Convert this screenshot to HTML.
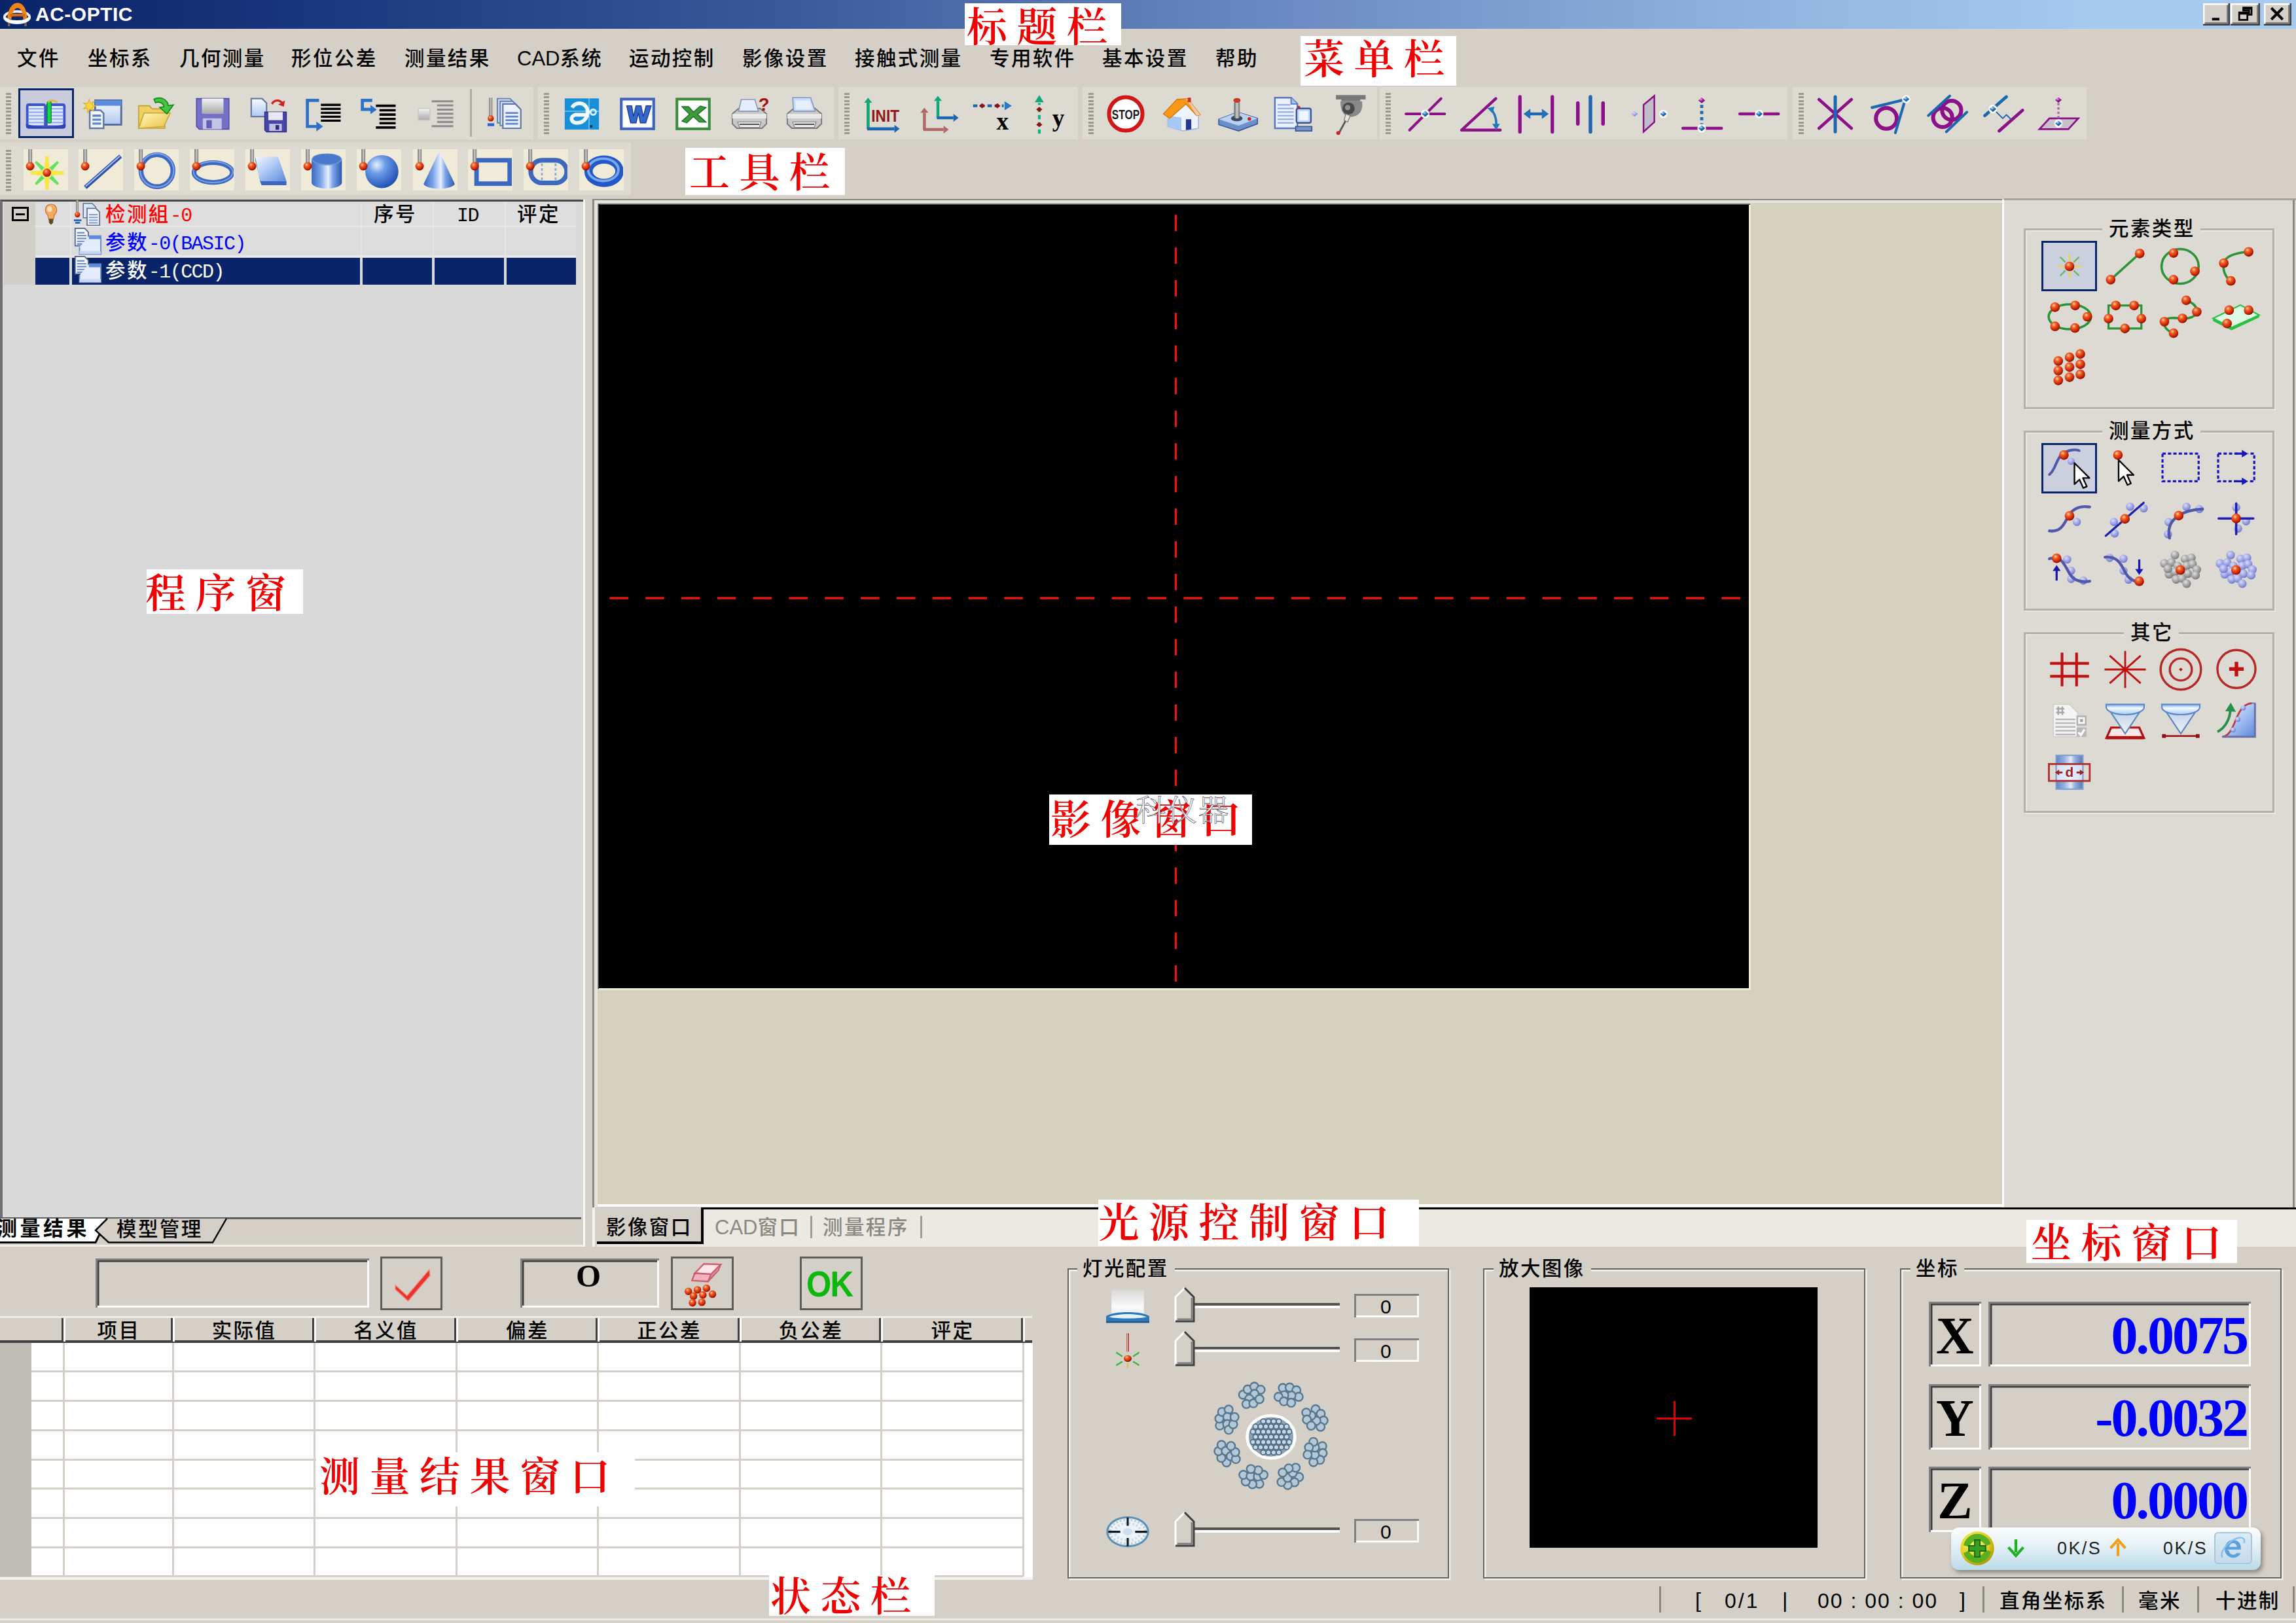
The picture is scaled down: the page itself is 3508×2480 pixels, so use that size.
<!DOCTYPE html>
<html lang="zh-CN"><head><meta charset="utf-8"><title>AC-OPTIC</title><style>
html,body{margin:0;padding:0;}
body{width:3508px;height:2480px;overflow:hidden;background:#d4d0c8;position:relative;font-family:"Liberation Sans","Noto Sans CJK SC",sans-serif;}
#r{position:absolute;left:0;top:0;width:3508px;height:2480px;overflow:hidden;}
#r div,#r svg{position:absolute;}
.t{white-space:nowrap;font-family:"Liberation Sans","Noto Sans CJK SC",sans-serif;}
.c{letter-spacing:2.4px;font-weight:500;}
.l{letter-spacing:0;font-size:31px;}
.m{font-family:"Liberation Mono","Noto Sans CJK SC",monospace;letter-spacing:-1.55px;font-size:30px;}
.s{font-family:"Liberation Sans","Noto Sans CJK SC",sans-serif;}
.s2{font-family:"Liberation Serif","Noto Serif CJK SC",serif;}
.wm{white-space:nowrap;color:#fff;-webkit-text-stroke:.7px #556;font-weight:300;font-family:"Liberation Serif","Noto Serif CJK SC",serif;letter-spacing:2px;}
.lab{background:#fff;color:#f00000;white-space:nowrap;font-weight:600;font-family:"Liberation Serif","Noto Serif CJK SC",serif;overflow:hidden;}
</style></head><body>
<svg width="0" height="0" style="position:absolute"><defs>
<radialGradient id="rb" cx="38%" cy="32%" r="70%"><stop offset="0" stop-color="#ffd8a8"/><stop offset=".3" stop-color="#f46028"/><stop offset=".7" stop-color="#d02808"/><stop offset="1" stop-color="#801000"/></radialGradient>
<radialGradient id="bb" cx="38%" cy="32%" r="70%"><stop offset="0" stop-color="#c8e8ff"/><stop offset=".4" stop-color="#2c80c8"/><stop offset="1" stop-color="#0c3c78"/></radialGradient>
<radialGradient id="pb" cx="38%" cy="32%" r="70%"><stop offset="0" stop-color="#f0b0f0"/><stop offset=".4" stop-color="#a020a0"/><stop offset="1" stop-color="#500050"/></radialGradient>
<radialGradient id="lb" cx="38%" cy="32%" r="70%"><stop offset="0" stop-color="#d8dcff"/><stop offset=".6" stop-color="#9aa0e0"/><stop offset="1" stop-color="#7078c8"/></radialGradient>
<radialGradient id="gb" cx="38%" cy="32%" r="70%"><stop offset="0" stop-color="#e0e0e0"/><stop offset=".6" stop-color="#a0a0a0"/><stop offset="1" stop-color="#787878"/></radialGradient>
<radialGradient id="sph" cx="35%" cy="30%" r="75%"><stop offset="0" stop-color="#e8f2ff"/><stop offset=".35" stop-color="#6c9ce8"/><stop offset="1" stop-color="#1c4cb0"/></radialGradient>
<linearGradient id="bv" x1="0" y1="0" x2="0" y2="1"><stop offset="0" stop-color="#b8d0f8"/><stop offset="1" stop-color="#3c68c8"/></linearGradient>
<linearGradient id="bh" x1="0" y1="0" x2="1" y2="0"><stop offset="0" stop-color="#3868c0"/><stop offset=".3" stop-color="#7ca4e8"/><stop offset=".55" stop-color="#e8f0ff"/><stop offset=".7" stop-color="#7ca4e8"/><stop offset="1" stop-color="#2c58b0"/></linearGradient>
<linearGradient id="bd" x1="0" y1="0" x2="1" y2="1"><stop offset="0" stop-color="#f4f8ff"/><stop offset=".5" stop-color="#a8c4f4"/><stop offset="1" stop-color="#5c88dc"/></linearGradient>
<linearGradient id="pg" x1="0" y1="0" x2="0" y2="1"><stop offset="0" stop-color="#f8fbff"/><stop offset="1" stop-color="#b0c8f0"/></linearGradient>
<linearGradient id="st" x1="0" y1="0" x2="1" y2="0"><stop offset="0" stop-color="#606060"/><stop offset=".5" stop-color="#d0d0d0"/><stop offset="1" stop-color="#707070"/></linearGradient>
<linearGradient id="fo" x1="0" y1="0" x2="1" y2="1"><stop offset="0" stop-color="#fff8c0"/><stop offset="1" stop-color="#e8c040"/></linearGradient>
<linearGradient id="gr" x1="0" y1="0" x2="0" y2="1"><stop offset="0" stop-color="#f4f4f4"/><stop offset="1" stop-color="#a8a8a8"/></linearGradient>
<linearGradient id="ln" x1="0" y1="0" x2="0" y2="1"><stop offset="0" stop-color="#6c9ce0"/><stop offset=".35" stop-color="#f4faff"/><stop offset="1" stop-color="#a8c8f0"/></linearGradient>
<linearGradient id="cn" x1="0" y1="0" x2="0" y2="1"><stop offset="0" stop-color="#b8ccec"/><stop offset="1" stop-color="#f4f4f4"/></linearGradient>
<radialGradient id="g360" cx="40%" cy="35%" r="70%"><stop offset="0" stop-color="#fff870"/><stop offset=".6" stop-color="#e8d020"/><stop offset="1" stop-color="#b09000"/></radialGradient>
</defs></svg>
<div id="r">
<div style="left:0px;top:0px;width:3508px;height:44px;background:linear-gradient(90deg,#0a246a 0%,#1c3880 15%,#3d5a9c 35%,#6a88c0 55%,#8fb0dd 75%,#a6caf0 92%,#a6caf0 100%);"></div>
<svg class="i" style="left:5px;top:0px;" width="42" height="42" viewBox="0 0 24 24"><ellipse cx="12" cy="15" rx="11" ry="5" fill="none" stroke="#e8f0f8" stroke-width="2.2"/><path d="M3.5 17 C4 7 8 2.5 12.5 2.5 C17 2.5 20.5 7 21 17 L17.5 17 C17 10 15 7 12.5 7 C10 7 8 10 7 17 Z" fill="#f08418"/><path d="M6 12 H19 V14.4 H6 Z" fill="#d86808"/><path d="M1.5 15.5 C4 20 20 20 22.8 15.5" fill="none" stroke="#fff" stroke-width="2.2"/><rect x="4" y="20" width="2" height="3" fill="#806040"/><rect x="18.5" y="20" width="2" height="3" fill="#806040"/></svg>
<div class="t s" style="left:54px;top:-8px;height:60px;line-height:60px;font-size:30px;color:#fff;font-weight:bold;letter-spacing:0.5px;">AC-OPTIC</div>
<div style="left:3366px;top:5px;width:41px;height:34px;background:#d4d0c8;box-shadow:inset -2.5px -2.5px 0 #404040, inset 2.5px 2.5px 0 #fff, inset -5px -5px 0 #808080;"></div>
<svg class="i" style="left:3370.5px;top:6px;" width="30" height="30" viewBox="0 0 24 24"><rect x="7" y="17" width="9" height="3.2" fill="#000"/></svg>
<div style="left:3408px;top:5px;width:45px;height:34px;background:#d4d0c8;box-shadow:inset -2.5px -2.5px 0 #404040, inset 2.5px 2.5px 0 #fff, inset -5px -5px 0 #808080;"></div>
<svg class="i" style="left:3414.5px;top:6px;" width="30" height="30" viewBox="0 0 24 24"><path d="M10 4.5 H20 V13 H17 V8 H10 Z" fill="none" stroke="#000" stroke-width="2.2"/><rect x="5" y="10.5" width="10" height="9" fill="none" stroke="#000" stroke-width="2.2"/><rect x="5" y="10" width="10" height="3" fill="#000"/><rect x="10" y="4" width="10" height="3" fill="#000"/></svg>
<div style="left:3459px;top:5px;width:42px;height:34px;background:#d4d0c8;box-shadow:inset -2.5px -2.5px 0 #404040, inset 2.5px 2.5px 0 #fff, inset -5px -5px 0 #808080;"></div>
<svg class="i" style="left:3464px;top:6px;" width="30" height="30" viewBox="0 0 24 24"><path d="M5 5 L19 19 M19 5 L5 19" stroke="#000" stroke-width="3.2"/></svg>
<div class="t c" style="left:26px;top:58.5px;height:61px;line-height:61px;font-size:30.5px;color:#000;">文件</div>
<div class="t c" style="left:134px;top:58.5px;height:61px;line-height:61px;font-size:30.5px;color:#000;">坐标系</div>
<div class="t c" style="left:274px;top:58.5px;height:61px;line-height:61px;font-size:30.5px;color:#000;">几何测量</div>
<div class="t c" style="left:445px;top:58.5px;height:61px;line-height:61px;font-size:30.5px;color:#000;">形位公差</div>
<div class="t c" style="left:618px;top:58.5px;height:61px;line-height:61px;font-size:30.5px;color:#000;">测量结果</div>
<div class="t c" style="left:790px;top:58.5px;height:61px;line-height:61px;font-size:30.5px;color:#000;"><span class="l">CAD</span>系统</div>
<div class="t c" style="left:961px;top:58.5px;height:61px;line-height:61px;font-size:30.5px;color:#000;">运动控制</div>
<div class="t c" style="left:1134px;top:58.5px;height:61px;line-height:61px;font-size:30.5px;color:#000;">影像设置</div>
<div class="t c" style="left:1306px;top:58.5px;height:61px;line-height:61px;font-size:30.5px;color:#000;">接触式测量</div>
<div class="t c" style="left:1512px;top:58.5px;height:61px;line-height:61px;font-size:30.5px;color:#000;">专用软件</div>
<div class="t c" style="left:1684px;top:58.5px;height:61px;line-height:61px;font-size:30.5px;color:#000;">基本设置</div>
<div class="t c" style="left:1857px;top:58.5px;height:61px;line-height:61px;font-size:30.5px;color:#000;">帮助</div>
<div style="left:0px;top:133px;width:815px;height:80px;background:#dddad2;"></div>
<div style="left:9px;top:142px;width:8px;height:63px;background:repeating-linear-gradient(180deg,#8a8880 0,#8a8880 2.7px,transparent 2.7px,transparent 5.5px);opacity:.8"></div>
<div style="left:27.5px;top:135px;width:85px;height:76px;background:#c8ccdc;border:3px solid #0a246a;box-sizing:border-box;"></div>
<svg class="i" style="left:37px;top:141px;" width="66" height="66" viewBox="0 0 24 24"><path d="M1 7.8 Q1 6.2 2.6 6.2 H10.6 Q12 6.2 12 7.6 Q12 6.2 13.4 6.2 H21.4 Q23 6.2 23 7.8 V18.6 Q23 20.2 21.4 20.2 H2.6 Q1 20.2 1 18.6 Z" fill="#3c54c8"/><path d="M2.4 7.6 H11 V18.4 H2.4 Z M13 7.6 H21.6 V18.4 H13 Z" fill="#e4ecff"/><path d="M2.4 9.2 H11 M2.4 11.1 H11 M2.4 13 H11 M2.4 14.9 H11 M2.4 16.8 H11 M13 9.2 H21.6 M13 11.1 H21.6 M13 13 H21.6 M13 14.9 H21.6 M13 16.8 H21.6" stroke="#98b0f4" stroke-width=".9"/><path d="M1 17.5 Q12 21 23 17.5 V18.6 Q23 20.2 21.4 20.2 H2.6 Q1 20.2 1 18.6 Z" fill="#2c44b8"/><rect x="12.8" y="5.2" width="2.2" height="11.8" rx=".7" fill="#18d448" stroke="#0c9030" stroke-width=".5"/><path d="M13 5.4 Q16 3.6 18.4 5.8" fill="none" stroke="#e0b838" stroke-width=".9"/></svg>
<svg class="i" style="left:122px;top:141px;" width="66" height="66" viewBox="0 0 24 24"><rect x="8.5" y="4.5" width="14.5" height="13.5" fill="url(#pg)" stroke="#506898" stroke-width="1"/><rect x="8.5" y="4.5" width="14.5" height="3" fill="#5c8ce0"/><path d="M5.5 10 H11.5 L13.2 11.7 V20 H5.5 Z" fill="#f4f8ff" stroke="#6078a8" stroke-width=".9"/><path d="M7 13 H11.8 M7 15.2 H11.8 M7 17.4 H11.8" stroke="#5c84d0" stroke-width="1.2"/><path d="M5.2 4 L5.9 6.2 L8 5 L6.8 7 L9 7.6 L6.8 8.3 L7.7 10.5 L5.6 9.2 L4.4 11.4 L4.2 8.9 L2 9.2 L3.8 7.6 L2 5.9 L4.3 6.4 Z" fill="#f8d840" stroke="#e0b020" stroke-width=".4"/></svg>
<svg class="i" style="left:205px;top:141px;" width="66" height="66" viewBox="0 0 24 24"><path d="M2.5 7.5 H8.5 L10 9.2 H17 V20 H2.5 Z" fill="#f0d060" stroke="#c0a030" stroke-width=".6"/><path d="M2.5 20 L5.5 11.5 H20 L16.5 19 Z" fill="url(#fo)" stroke="#c8a838" stroke-width=".6"/><path d="M11 3.8 C14.5 2.2 18.5 3.8 19 7.4 L21.8 7 L18.2 12 L14.2 8.4 L16.6 8 C16.2 5.8 13.8 5 11.8 5.8 Z" fill="#40c840" stroke="#188818" stroke-width=".6"/></svg>
<svg class="i" style="left:292px;top:141px;" width="66" height="66" viewBox="0 0 24 24"><path d="M3 3.5 H21 V20.5 H4.5 L3 19 Z" fill="#7470c8" stroke="#5450a8" stroke-width=".6"/><rect x="6" y="3.5" width="12" height="8.5" fill="url(#gr)"/><rect x="6.5" y="14.5" width="10.5" height="6" fill="#c4c4e8"/><rect x="8.5" y="15.5" width="3" height="4.5" fill="#6460b8"/></svg>
<svg class="i" style="left:377px;top:141px;" width="66" height="66" viewBox="0 0 24 24"><path d="M2.5 3.5 H8.5 L11 6 V13.5 H2.5 Z" fill="url(#pg)" stroke="#6878a0" stroke-width=".8"/><path d="M10 11 H22 V22 H11 L10 21 Z" fill="#4844a8" stroke="#302c80" stroke-width=".5"/><rect x="12" y="11" width="8" height="4.5" fill="#e8e8f4"/><rect x="12.5" y="17.5" width="7" height="4" fill="#c0c0e0"/><rect x="16" y="18.2" width="2" height="2.6" fill="#302c80"/><path d="M14 6.5 C15.5 4 18.5 4 20 6.5" fill="none" stroke="#d02020" stroke-width="1.2"/><path d="M21.2 4.5 L20.6 8 L17.5 6.8 Z" fill="#d02020"/></svg>
<svg class="i" style="left:460px;top:141px;" width="66" height="66" viewBox="0 0 24 24"><path d="M10 4.5 H3.5 V19 H9" fill="none" stroke="#2c70c8" stroke-width="1.7"/><path d="M8.5 16.3 L12.2 19 L8.5 21.7 Z" fill="#2c70c8"/><path d="M11 7 H22 M11 9.2 H22 M11 11.4 H22 M11 13.6 H22 M11 15.8 H22" stroke="#000" stroke-width="1.2"/></svg>
<svg class="i" style="left:544px;top:141px;" width="66" height="66" viewBox="0 0 24 24"><path d="M9 4.5 H3.5 V9.5 H9" fill="none" stroke="#2c70c8" stroke-width="1.7"/><path d="M8 7 L11.5 9.6 L8 12.2 Z" fill="#2c70c8"/><path d="M11 7.5 H22 M13 10 H22 M13 12.4 H22 M13 14.8 H22 M13 17.2 H22 M11 19.6 H22" stroke="#000" stroke-width="1.3"/></svg>
<svg class="i" style="left:632px;top:141px;" width="66" height="66" viewBox="0 0 24 24"><rect x="2.5" y="9" width="6.5" height="6.5" rx=".8" fill="url(#gr)" stroke="#c8c8c8" stroke-width=".6"/><path d="M10 5 H22 M13 7.3 H22 M13 9.6 H22 M13 11.9 H22 M13 14.2 H22 M13 16.5 H22 M10 18.8 H22" stroke="#8c8c8c" stroke-width="1.1"/></svg>
<svg class="i" style="left:738px;top:141px;" width="66" height="66" viewBox="0 0 24 24"><rect x="3.4" y="3" width="1.8" height="11" fill="url(#st)"/><circle cx="4.3" cy="14.5" r="1.7" fill="url(#rb)"/><path d="M2.5 18 H6.2" stroke="#2468c8" stroke-width="1.6"/><path d="M8 3.5 H15 L18 6.5 V17 H8 Z" fill="#c8d8f4" stroke="#6880b0" stroke-width=".7"/><path d="M9.5 5 H16.5 L19.5 8 V18.5 H9.5 Z" fill="#d8e4fa" stroke="#6880b0" stroke-width=".7"/><path d="M11 6.5 H18 L21 9.5 V20 H11 Z" fill="#ecf2ff" stroke="#6078a8" stroke-width=".8"/><path d="M12.5 11.5 H19.5 M12.5 13.5 H19.5 M12.5 15.5 H19.5 M12.5 17.5 H19.5" stroke="#5c84d0" stroke-width="1"/></svg>
<div style="left:822px;top:133px;width:452px;height:80px;background:#dddad2;"></div>
<div style="left:831px;top:142px;width:8px;height:63px;background:repeating-linear-gradient(180deg,#8a8880 0,#8a8880 2.7px,transparent 2.7px,transparent 5.5px);opacity:.8"></div>
<svg class="i" style="left:856px;top:141px;" width="66" height="66" viewBox="0 0 24 24"><rect x="2.5" y="3.4" width="19" height="17.3" fill="#1890d8"/><path d="M16 3.4 V20.7 M2.5 10.5 H21.5" stroke="#70c0f0" stroke-width=".6"/><path d="M6.5 8.5 C8.5 5.2 13.5 5.2 15 9.3 C16 13 13.5 17 9.5 17 C6 17 5 13.6 8.3 12.5 H16" fill="none" stroke="#f0faff" stroke-width="2.1"/><circle cx="18.3" cy="11" r="1.5" fill="none" stroke="#e0f4ff" stroke-width="1"/><rect x="16.5" y="18.3" width="1.3" height="1.3" fill="#082848"/></svg>
<svg class="i" style="left:941px;top:141px;" width="66" height="66" viewBox="0 0 24 24"><rect x="3" y="3.8" width="18" height="16.5" fill="#fff" stroke="#3c64c0" stroke-width="1.5"/><path d="M6 7.5 L8.2 17 L11.2 17 L12.5 11.5 L13.6 17 L16.6 17 L19.6 7.5 L16.8 7.5 L15.2 13.5 L14 7.5 L11.2 7.5 L9.8 13.5 L8.8 7.5 Z" fill="#3468c8" stroke="#1c3c98" stroke-width=".5"/></svg>
<svg class="i" style="left:1026px;top:141px;" width="66" height="66" viewBox="0 0 24 24"><rect x="3" y="3.8" width="18" height="16.5" fill="#fff" stroke="#3c8c3c" stroke-width="1.5"/><path d="M5.8 8 L9.5 8 L12.2 11 L16 7.6 L19.2 8.5 L14.5 12.3 L19.2 16.6 L15.5 16.6 L12.2 13.5 L8.5 17 L5.8 16 L10 12.3 Z" fill="#3c9c3c" stroke="#1c6c1c" stroke-width=".5"/></svg>
<svg class="i" style="left:1112px;top:141px;" width="66" height="66" viewBox="0 0 24 24"><path d="M2.5 12 L6 9 H18 L21.5 12 V17.5 L19 20 H5 L2.5 17.5 Z" fill="#c8c8c8" stroke="#787878" stroke-width=".7"/><path d="M2.5 12 H21.5 V14.5 H2.5 Z" fill="#e8e8e8"/><path d="M5.5 16.5 H18.5 L17.5 19.5 H6.5 Z" fill="#f8f8f8" stroke="#888" stroke-width=".5"/><path d="M6.5 17.8 H17.5" stroke="#505050" stroke-width=".8"/><path d="M6 10.5 L7.5 4 H15 L17 10.5 Z" fill="#e4eeff" stroke="#8898b8" stroke-width=".6"/><text x="17" y="10" font-family="Liberation Sans, sans-serif" font-weight="bold" font-size="10" fill="#a01010">?</text></svg>
<svg class="i" style="left:1196px;top:141px;" width="66" height="66" viewBox="0 0 24 24"><path d="M2.5 12 L6 9 H18 L21.5 12 V17.5 L19 20 H5 L2.5 17.5 Z" fill="#c8c8c8" stroke="#787878" stroke-width=".7"/><path d="M2.5 12 H21.5 V14.5 H2.5 Z" fill="#e8e8e8"/><path d="M5.5 16.5 H18.5 L17.5 19.5 H6.5 Z" fill="#f8f8f8" stroke="#888" stroke-width=".5"/><path d="M6.5 17.8 H17.5" stroke="#505050" stroke-width=".8"/><path d="M6 10.5 L5.5 3 H15.5 L18 10.5 Z" fill="#c8dcff" stroke="#8898b8" stroke-width=".6"/><path d="M7 4.5 H15 L16.5 9.5 H7.4 Z" fill="#e8f0ff"/></svg>
<div style="left:1281px;top:133px;width:366px;height:80px;background:#dddad2;"></div>
<div style="left:1290px;top:142px;width:8px;height:63px;background:repeating-linear-gradient(180deg,#8a8880 0,#8a8880 2.7px,transparent 2.7px,transparent 5.5px);opacity:.8"></div>
<svg class="i" style="left:1314px;top:141px;" width="66" height="66" viewBox="0 0 24 24"><line x1="4.5" y1="20.5" x2="4.50" y2="5.86" stroke="#10a878" stroke-width="1.7"/><path d="M4.50 3.00 L6.70 5.86 L2.30 5.86 Z" fill="#10a878"/><line x1="4" y1="20.3" x2="19.14" y2="20.30" stroke="#1c68b0" stroke-width="1.7"/><path d="M22.00 20.30 L19.14 22.50 L19.14 18.10 Z" fill="#1c68b0"/><text x="6.3" y="16.5" font-family="Liberation Sans, sans-serif" font-size="9.2" font-weight="bold" fill="#901818" textLength="15.5" lengthAdjust="spacingAndGlyphs">INIT</text></svg>
<svg class="i" style="left:1400px;top:141px;" width="66" height="66" viewBox="0 0 24 24"><line x1="4.5" y1="21" x2="4.50" y2="11.36" stroke="#b06868" stroke-width="1.6"/><path d="M4.50 8.50 L6.70 11.36 L2.30 11.36 Z" fill="#b06868"/><line x1="4" y1="20.7" x2="15.14" y2="20.70" stroke="#b06868" stroke-width="1.6"/><path d="M18.00 20.70 L15.14 22.90 L15.14 18.50 Z" fill="#b06868"/><line x1="12" y1="14.5" x2="12.00" y2="4.86" stroke="#10a878" stroke-width="1.6"/><path d="M12.00 2.00 L14.20 4.86 L9.80 4.86 Z" fill="#10a878"/><line x1="11.5" y1="14.2" x2="20.64" y2="14.20" stroke="#1c68b0" stroke-width="1.6"/><path d="M23.50 14.20 L20.64 16.40 L20.64 12.00 Z" fill="#1c68b0"/></svg>
<svg class="i" style="left:1484px;top:141px;" width="66" height="66" viewBox="0 0 24 24"><path d="M1 7.5 H18" stroke="#1c68b0" stroke-width="1.5" stroke-dasharray="2.4 1.6"/><path d="M22.5 7.5 L18.5 5 V10 Z" fill="#2c78c8"/><path d="M4.3 7.5 L6 6.1 L7.7 7.5 L6 8.9 Z" fill="#901010"/><path d="M12.799999999999999 7.5 L14.5 6.1 L16.2 7.5 L14.5 8.9 Z" fill="#901010"/><text x="14" y="20.6" font-family="Liberation Serif, serif" font-size="13.5" font-weight="bold" fill="#000">x</text></svg>
<svg class="i" style="left:1570px;top:141px;" width="66" height="66" viewBox="0 0 24 24"><path d="M6.5 23 V6" stroke="#10b080" stroke-width="1.5" stroke-dasharray="2.4 1.6"/><path d="M6.5 1.5 L4 5.5 H9 Z" fill="#10a878"/><path d="M4.8 9.5 L6.5 8.1 L8.200000000000001 9.5 L6.5 10.9 Z" fill="#901010"/><path d="M4.8 18 L6.5 16.6 L8.200000000000001 18 L6.5 19.4 Z" fill="#901010"/><text x="13.7" y="19" font-family="Liberation Serif, serif" font-size="13.5" font-weight="bold" fill="#000">y</text></svg>
<div style="left:1654px;top:133px;width:450px;height:80px;background:#dddad2;"></div>
<div style="left:1663px;top:142px;width:8px;height:63px;background:repeating-linear-gradient(180deg,#8a8880 0,#8a8880 2.7px,transparent 2.7px,transparent 5.5px);opacity:.8"></div>
<svg class="i" style="left:1687px;top:141px;" width="66" height="66" viewBox="0 0 24 24"><circle cx="12" cy="12" r="9.3" fill="#fff" stroke="#d01818" stroke-width="2.2"/><text x="4.3" y="14.8" font-family="Liberation Sans, sans-serif" font-size="7.4" font-weight="bold" fill="#181818" textLength="15.4" lengthAdjust="spacingAndGlyphs">STOP</text></svg>
<svg class="i" style="left:1772px;top:141px;" width="66" height="66" viewBox="0 0 24 24"><path d="M4.5 12 L12.5 5 L21.5 12.5 V20 L13 21.5 L4.5 19 Z" fill="#eef4ff" stroke="#a0b8e0" stroke-width=".6"/><path d="M4.5 13 L4.5 19 L12 21.3 V14 Z" fill="#a8c8f4"/><path d="M2 12 L9.5 4 L15.5 3.5 L22.5 12.5 L20.5 13 L14.5 6.5 L5.5 14.5 Z" fill="#f89818" stroke="#d87808" stroke-width=".5"/><path d="M14.5 3.6 L15.6 3.5 L22.5 12.5 L20.5 13 Z" fill="#f8c8a0"/><rect x="15.5" y="3" width="1.8" height="2.5" fill="#c83020"/><path d="M14.5 15 H17.5 V20.5 L14.5 21 Z" fill="#283890"/></svg>
<svg class="i" style="left:1858px;top:141px;" width="66" height="66" viewBox="0 0 24 24"><path d="M1.5 15 L12 11 L23 14.5 V17.5 L12.5 21.5 L1.5 18 Z" fill="#6c90c8" stroke="#38589c" stroke-width=".6"/><path d="M1.5 15 L12 11 L23 14.5 L12.5 18.5 Z" fill="#b8d0f4"/><ellipse cx="11.5" cy="14.5" rx="3.2" ry="1.6" fill="#404860"/><rect x="10" y="5" width="3.2" height="9.5" rx="1.2" fill="url(#st)"/><ellipse cx="11.6" cy="4.5" rx="2" ry="1.3" fill="#c83828"/><circle cx="18.5" cy="14.8" r="1" fill="#d02020"/></svg>
<svg class="i" style="left:1941px;top:141px;" width="66" height="66" viewBox="0 0 24 24"><path d="M2.5 3 H11.5 L15 6.5 V20 H2.5 Z" fill="#e8f0ff" stroke="#5878c0" stroke-width=".9"/><path d="M11.5 3 V6.5 H15" fill="#a8c0f0" stroke="#5878c0" stroke-width=".7"/><path d="M4 7 H11 M4 9 H13 M4 11 H13 M4 13 H13 M4 15 H13 M4 17 H13" stroke="#8ca8e0" stroke-width=".8"/><rect x="14.5" y="9" width="8" height="8" rx="1" fill="#c8d8f0" stroke="#385898" stroke-width=".9"/><rect x="16" y="10.5" width="5" height="5" fill="#f0f6ff"/><path d="M14 19 H23 V21.5 H14 Z" fill="#7890c0" stroke="#385898" stroke-width=".6"/><circle cx="15.8" cy="8.3" r=".8" fill="#d02020"/></svg>
<svg class="i" style="left:2026px;top:141px;" width="66" height="66" viewBox="0 0 24 24"><path d="M5.5 1.5 H22 V4 H19 V5 H8.5 V4 H5.5 Z" fill="#787878"/><path d="M8 5 C8 13 12 14 15 13.5 C20 12.5 20.5 8 20 5 Z" fill="#888"/><circle cx="12.5" cy="9" r="3.4" fill="#484848"/><circle cx="12" cy="8.5" r="1.5" fill="#909090"/><path d="M11 12 L13.5 13 L12 16.5 L10 15.5 Z" fill="#e0e0e0" stroke="#707070" stroke-width=".4"/><path d="M10.8 16 L7 23" stroke="#585858" stroke-width="1"/><circle cx="6.8" cy="22.6" r="1.1" fill="#d02020"/></svg>
<div style="left:2108px;top:133px;width:623px;height:80px;background:#dddad2;"></div>
<div style="left:2117px;top:142px;width:8px;height:63px;background:repeating-linear-gradient(180deg,#8a8880 0,#8a8880 2.7px,transparent 2.7px,transparent 5.5px);opacity:.8"></div>
<svg class="i" style="left:2144px;top:141px;" width="66" height="66" viewBox="0 0 24 24"><line x1="1.5" y1="12" x2="23" y2="12" stroke="#8c1088" stroke-width="1.5" stroke-linecap="round" /><line x1="3.5" y1="21" x2="21" y2="3.5" stroke="#8c1088" stroke-width="1.5" stroke-linecap="round" /><circle cx="12.2" cy="12" r="2.4000000000000004" fill="#fff"/><path d="M10.299999999999999 12 L12.2 10.4 L14.1 12 L12.2 13.6 Z" fill="url(#bb)"/></svg>
<svg class="i" style="left:2229px;top:141px;" width="66" height="66" viewBox="0 0 24 24"><path d="M1.5 21 H23 M1.5 21 L20.5 3.5" fill="none" stroke="#8c1088" stroke-width="1.6" stroke-linecap="round"/><path d="M17.5 9 C20 11.5 21 15 20.8 19" fill="none" stroke="#2478c0" stroke-width="1.3"/><path d="M15.8 8.8 L19.8 8 L18.6 11.6 Z M18.5 17.5 L22.8 17.5 L20.7 21 Z" fill="#2478c0"/></svg>
<svg class="i" style="left:2314px;top:141px;" width="66" height="66" viewBox="0 0 24 24"><line x1="3" y1="2.5" x2="3" y2="22" stroke="#8c1088" stroke-width="1.9" stroke-linecap="round" /><line x1="21" y1="2.5" x2="21" y2="22" stroke="#8c1088" stroke-width="1.9" stroke-linecap="round" /><path d="M7.5 12 H16.5" stroke="#1c68b0" stroke-width="1.6"/><path d="M5 12 L8.8 9.2 V14.8 Z M19 12 L15.2 9.2 V14.8 Z" fill="#2070b8"/></svg>
<svg class="i" style="left:2397px;top:141px;" width="66" height="66" viewBox="0 0 24 24"><line x1="5" y1="6" x2="5" y2="17.5" stroke="#8c1088" stroke-width="2" stroke-linecap="round" /><line x1="12" y1="2.5" x2="12" y2="22" stroke="#1c68b0" stroke-width="2" stroke-linecap="round" /><line x1="19" y1="6" x2="19" y2="17.5" stroke="#8c1088" stroke-width="2" stroke-linecap="round" /></svg>
<svg class="i" style="left:2485px;top:141px;" width="66" height="66" viewBox="0 0 24 24"><path d="M9.5 7 L15.5 2 V16.5 L9.5 22 Z" fill="#c0bcc8" stroke="#8c1088" stroke-width=".9"/><path d="M2.7 12 L4.5 10.5 L6.3 12 L4.5 13.5 Z" fill="url(#lb)"/><circle cx="20.5" cy="12" r="2.3" fill="#fff"/><path d="M18.7 12 L20.5 10.5 L22.3 12 L20.5 13.5 Z" fill="url(#bb)"/></svg>
<svg class="i" style="left:2567px;top:141px;" width="66" height="66" viewBox="0 0 24 24"><line x1="1.5" y1="20" x2="23" y2="20" stroke="#8c1088" stroke-width="1.6" stroke-linecap="round" /><path d="M12 7 V18" stroke="#1c68b0" stroke-width="1.7" stroke-dasharray="1.7 1.7"/><path d="M10.1 4.5 L12 2.9 L13.9 4.5 L12 6.1 Z" fill="url(#pb)"/><circle cx="12" cy="20" r="2.4000000000000004" fill="#fff"/><path d="M10.1 20 L12 18.4 L13.9 20 L12 21.6 Z" fill="url(#bb)"/></svg>
<svg class="i" style="left:2654px;top:141px;" width="66" height="66" viewBox="0 0 24 24"><line x1="1.5" y1="12" x2="23" y2="12" stroke="#8c1088" stroke-width="1.6" stroke-linecap="round" /><circle cx="12.3" cy="12" r="2.4000000000000004" fill="#fff"/><path d="M10.4 12 L12.3 10.4 L14.200000000000001 12 L12.3 13.6 Z" fill="url(#bb)"/></svg>
<div style="left:2739px;top:133px;width:449px;height:80px;background:#dddad2;"></div>
<div style="left:2748px;top:142px;width:8px;height:63px;background:repeating-linear-gradient(180deg,#8a8880 0,#8a8880 2.7px,transparent 2.7px,transparent 5.5px);opacity:.8"></div>
<svg class="i" style="left:2771px;top:141px;" width="66" height="66" viewBox="0 0 24 24"><line x1="3" y1="4" x2="21" y2="20" stroke="#8c1088" stroke-width="1.7" stroke-linecap="round" /><line x1="21" y1="4" x2="3" y2="20" stroke="#8c1088" stroke-width="1.7" stroke-linecap="round" /><line x1="12" y1="2.5" x2="12" y2="22" stroke="#1c68b0" stroke-width="1.8" stroke-linecap="round" /></svg>
<svg class="i" style="left:2856px;top:141px;" width="66" height="66" viewBox="0 0 24 24"><circle cx="9.5" cy="14.5" r="5.8" fill="none" stroke="#8c1088" stroke-width="2.2"/><line x1="1.5" y1="8.5" x2="20" y2="4" stroke="#1c68b0" stroke-width="1.5" stroke-linecap="round" /><line x1="20" y1="4" x2="14.5" y2="22.5" stroke="#1c68b0" stroke-width="1.5" stroke-linecap="round" /><circle cx="20.5" cy="3.8" r="2.3" fill="#fff"/><path d="M18.7 3.8 L20.5 2.3 L22.3 3.8 L20.5 5.3 Z" fill="url(#bb)"/></svg>
<svg class="i" style="left:2942px;top:141px;" width="66" height="66" viewBox="0 0 24 24"><circle cx="9.5" cy="14" r="5.3" fill="none" stroke="#8c1088" stroke-width="2.2"/><circle cx="14.5" cy="10" r="5.3" fill="none" stroke="#8c1088" stroke-width="2.2"/><line x1="1.5" y1="13" x2="13.5" y2="2" stroke="#1c68b0" stroke-width="1.4" stroke-linecap="round" /><line x1="11.5" y1="22" x2="23" y2="11" stroke="#1c68b0" stroke-width="1.4" stroke-linecap="round" /></svg>
<svg class="i" style="left:3027px;top:141px;" width="66" height="66" viewBox="0 0 24 24"><line x1="2" y1="13" x2="14" y2="2.5" stroke="#1c68b0" stroke-width="1.7" stroke-linecap="round" /><line x1="10" y1="21.5" x2="23" y2="10" stroke="#8c1088" stroke-width="1.7" stroke-linecap="round" /><path d="M7 9.5 L12 14.5 L14 12.5 L16.5 15" fill="none" stroke="#1c68b0" stroke-width=".7"/><circle cx="6.5" cy="9.3" r="2.4000000000000004" fill="#fff"/><path d="M4.6000000000000005 9.3 L6.5 7.700000000000001 L8.4 9.3 L6.5 10.9 Z" fill="url(#bb)"/></svg>
<svg class="i" style="left:3112px;top:141px;" width="66" height="66" viewBox="0 0 24 24"><path d="M7 14.5 H23 L17.5 20.5 H1.5 Z" fill="#c8c0cc" stroke="#8c1088" stroke-width="1"/><path d="M12 6 V16" stroke="#b060b0" stroke-width="1.2" stroke-dasharray="1.2 1.2"/><path d="M10.2 4.3 L12 2.8 L13.8 4.3 L12 5.8 Z" fill="url(#pb)"/><circle cx="12" cy="17.3" r="2.3" fill="#fff"/><path d="M10.2 17.3 L12 15.8 L13.8 17.3 L12 18.8 Z" fill="url(#bb)"/></svg>
<div style="left:717.5px;top:136px;width:3px;height:73px;background:#b0ada5;"></div>
<div style="left:0px;top:218px;width:964px;height:80px;background:#dddad2;"></div>
<div style="left:9px;top:229px;width:8px;height:63px;background:repeating-linear-gradient(180deg,#8a8880 0,#8a8880 2.7px,transparent 2.7px,transparent 5.5px);opacity:.8"></div>
<div style="left:36px;top:228px;width:68px;height:63px;background:#f0ead8;"></div>
<svg class="i" style="left:37px;top:226.5px;" width="66" height="66" viewBox="0 0 24 24"><path d="M14.10 15.20 L21.80 14.48 L21.80 12.72 L14.10 12.00 Z" fill="#f8e430" opacity=".85"/><path d="M11.00 15.10 L11.72 22.80 L13.48 22.80 L14.20 15.10 Z" fill="#f8e430" opacity=".85"/><path d="M11.10 12.00 L3.40 12.72 L3.40 14.48 L11.10 15.20 Z" fill="#f8e430" opacity=".85"/><path d="M14.20 12.10 L13.48 4.40 L11.72 4.40 L11.00 12.10 Z" fill="#f8e430" opacity=".85"/><path d="M13.94 16.50 L18.39 20.25 L19.25 19.39 L15.50 14.94 Z" fill="#48e048" opacity=".85"/><path d="M9.70 14.94 L5.95 19.39 L6.81 20.25 L11.26 16.50 Z" fill="#48e048" opacity=".85"/><path d="M11.26 10.70 L6.81 6.95 L5.95 7.81 L9.70 12.26 Z" fill="#48e048" opacity=".85"/><path d="M15.50 12.26 L19.25 7.81 L18.39 6.95 L13.94 10.70 Z" fill="#48e048" opacity=".85"/><circle cx="12.6" cy="13.4" r="2.3" fill="url(#rb)"/><rect x="2.3" y="0.3" width="2.1" height="8" fill="url(#st)"/><circle cx="3.3" cy="9.8" r="2.35" fill="url(#rb)"/></svg>
<div style="left:120px;top:228px;width:68px;height:63px;background:#f0ead8;"></div>
<svg class="i" style="left:121px;top:226.5px;" width="66" height="66" viewBox="0 0 24 24"><line x1="3.4" y1="21.6" x2="23" y2="4.2" stroke="#2c50b0" stroke-width="2.3"/><line x1="3.6" y1="21" x2="22.6" y2="4.2" stroke="#a8c0f0" stroke-width=".7"/><rect x="2.3" y="0.3" width="2.1" height="8" fill="url(#st)"/><circle cx="3.3" cy="9.8" r="2.35" fill="url(#rb)"/></svg>
<div style="left:205px;top:228px;width:68px;height:63px;background:#f0ead8;"></div>
<svg class="i" style="left:206px;top:226.5px;" width="66" height="66" viewBox="0 0 24 24"><circle cx="12.3" cy="12.3" r="8.9" fill="none" stroke="#3c68c0" stroke-width="2.7"/><circle cx="12.3" cy="12.1" r="9.3" fill="none" stroke="#7ca0e8" stroke-width=".8"/><rect x="2.3" y="0.3" width="2.1" height="8" fill="url(#st)"/><circle cx="3.3" cy="9.8" r="2.35" fill="url(#rb)"/></svg>
<div style="left:290px;top:228px;width:68px;height:63px;background:#f0ead8;"></div>
<svg class="i" style="left:291px;top:226.5px;" width="66" height="66" viewBox="0 0 24 24"><ellipse cx="12.6" cy="13.3" rx="10.6" ry="5.5" fill="none" stroke="#3c68c0" stroke-width="2.6"/><ellipse cx="12.6" cy="13.1" rx="10.9" ry="5.8" fill="none" stroke="#7ca0e8" stroke-width=".7"/><rect x="2.3" y="0.3" width="2.1" height="8" fill="url(#st)"/><circle cx="3.3" cy="9.8" r="2.35" fill="url(#rb)"/></svg>
<div style="left:375px;top:228px;width:68px;height:63px;background:#f0ead8;"></div>
<svg class="i" style="left:376px;top:226.5px;" width="66" height="66" viewBox="0 0 24 24"><path d="M5.1 4.5 H17.8 L22.4 18.1 H7.8 Z" fill="url(#bd)"/><path d="M7.8 18.1 H22.4 V20.4 H8.6 Z" fill="#3c64c0"/><path d="M5.1 4.5 L7.8 18.1 L8.6 20.4 L5.1 6.5 Z" fill="#5078c8"/><rect x="2.3" y="0.3" width="2.1" height="8" fill="url(#st)"/><circle cx="3.3" cy="9.8" r="2.35" fill="url(#rb)"/></svg>
<div style="left:460px;top:228px;width:68px;height:63px;background:#f0ead8;"></div>
<svg class="i" style="left:461px;top:226.5px;" width="66" height="66" viewBox="0 0 24 24"><path d="M5.5 6 V19 A8.4 3.2 0 0 0 22.3 19 V6 Z" fill="url(#bh)"/><ellipse cx="13.9" cy="6" rx="8.4" ry="3.3" fill="#6c94dc"/><ellipse cx="13.9" cy="5.8" rx="7.8" ry="2.8" fill="#4c78cc"/><rect x="2.3" y="0.3" width="2.1" height="8" fill="url(#st)"/><circle cx="3.3" cy="9.8" r="2.35" fill="url(#rb)"/></svg>
<div style="left:545px;top:228px;width:68px;height:63px;background:#f0ead8;"></div>
<svg class="i" style="left:546px;top:226.5px;" width="66" height="66" viewBox="0 0 24 24"><circle cx="13.6" cy="12.8" r="9.2" fill="url(#sph)"/><rect x="2.3" y="0.3" width="2.1" height="8" fill="url(#st)"/><circle cx="3.3" cy="9.8" r="2.35" fill="url(#rb)"/></svg>
<div style="left:631px;top:228px;width:68px;height:63px;background:#f0ead8;"></div>
<svg class="i" style="left:632px;top:226.5px;" width="66" height="66" viewBox="0 0 24 24"><path d="M14.2 1.5 L22.8 19.5 A8.6 2.8 0 0 1 5.6 19.5 Z" fill="url(#bh)"/><rect x="2.3" y="0.3" width="2.1" height="8" fill="url(#st)"/><circle cx="3.3" cy="9.8" r="2.35" fill="url(#rb)"/></svg>
<div style="left:715px;top:228px;width:68px;height:63px;background:#f0ead8;"></div>
<svg class="i" style="left:716px;top:226.5px;" width="66" height="66" viewBox="0 0 24 24"><rect x="4.4" y="6.5" width="18.4" height="13" fill="none" stroke="#3c68c0" stroke-width="2.5"/><rect x="2.3" y="0.3" width="2.1" height="8" fill="url(#st)"/><circle cx="3.3" cy="9.8" r="2.35" fill="url(#rb)"/></svg>
<div style="left:800px;top:228px;width:68px;height:63px;background:#f0ead8;"></div>
<svg class="i" style="left:801px;top:226.5px;" width="66" height="66" viewBox="0 0 24 24"><rect x="3.6" y="6.5" width="20" height="12.6" rx="6.3" fill="none" stroke="#3c68c0" stroke-width="2.6"/><path d="M9.8 8.3 V17.5 M17.4 8.3 V17.5" stroke="#88a8e0" stroke-width="1" stroke-dasharray="1.4 1.2"/><rect x="2.3" y="0.3" width="2.1" height="8" fill="url(#st)"/><circle cx="3.3" cy="9.8" r="2.35" fill="url(#rb)"/></svg>
<div style="left:885px;top:228px;width:68px;height:63px;background:#f0ead8;"></div>
<svg class="i" style="left:886px;top:226.5px;" width="66" height="66" viewBox="0 0 24 24"><ellipse cx="13.4" cy="12.6" rx="8.6" ry="6.5" fill="none" stroke="#2458c8" stroke-width="4.6"/><ellipse cx="13" cy="11.8" rx="8.4" ry="6.2" fill="none" stroke="#78a8f0" stroke-width="1.4"/><rect x="2.3" y="0.3" width="2.1" height="8" fill="url(#st)"/><circle cx="3.3" cy="9.8" r="2.35" fill="url(#rb)"/></svg>
<div style="left:0px;top:304px;width:894px;height:1602px;background:#d4d0c8;"></div>
<div style="left:0px;top:305px;width:891px;height:1557px;background:#d9d9d9;border-left:4px solid #707070;border-top:3px solid #484848;box-sizing:border-box;"></div>
<div style="left:6px;top:309px;width:48px;height:126px;background:#d2cfc8;"></div>
<div style="left:54px;top:309px;width:826px;height:37px;background:#dedede;"></div>
<div style="left:54px;top:347px;width:826px;height:43px;background:#dcdcdc;"></div>
<div style="left:107px;top:309px;width:2px;height:83px;background:#e6e6e6;"></div>
<div style="left:551px;top:309px;width:2px;height:83px;background:#e6e6e6;"></div>
<div style="left:661px;top:309px;width:2px;height:83px;background:#e6e6e6;"></div>
<div style="left:771px;top:309px;width:2px;height:83px;background:#e6e6e6;"></div>
<div style="left:54px;top:345px;width:826px;height:2px;background:#e8e8e8;"></div>
<div style="left:54px;top:390px;width:826px;height:3px;background:#e8e8e8;"></div>
<div style="left:54px;top:394px;width:826px;height:41px;background:#0a246a;"></div>
<div style="left:106px;top:394px;width:4px;height:41px;background:#d9d9d9;"></div>
<div style="left:550px;top:394px;width:4px;height:41px;background:#d9d9d9;"></div>
<div style="left:660px;top:394px;width:4px;height:41px;background:#d9d9d9;"></div>
<div style="left:770px;top:394px;width:4px;height:41px;background:#d9d9d9;"></div>
<div style="left:18px;top:316px;width:26px;height:22px;border:3px solid #000;box-sizing:border-box;"></div>
<div style="left:24px;top:325.5px;width:14px;height:3px;background:#000;"></div>
<svg class="i" style="left:60px;top:309px;" width="36" height="36" viewBox="0 0 24 24"><path d="M12 2 C6 2 4.5 9 8.5 13 L9.5 17 H14.5 L15.5 13 C19.5 9 18 2 12 2 Z" fill="#f4a860" stroke="#c07830" stroke-width=".8"/><ellipse cx="10.5" cy="7" rx="2.4" ry="3" fill="#fce0c0"/><path d="M9.5 17 H14.5 L14 21 L12 23 L10 21 Z" fill="#605020"/></svg>
<svg class="i" style="left:110px;top:304px;" width="46" height="46" viewBox="0 0 24 24"><rect x="3.2" y="1" width="2" height="10" fill="url(#st)"/><circle cx="4.3" cy="12.5" r="2.2" fill="url(#rb)"/><path d="M1.5 17 H7.5 M2.5 19 H6.5" stroke="#2468c8" stroke-width="1.5"/><path d="M9 3.5 H16 L19 6.5 V15 H9 Z" fill="#dce6fa" stroke="#607090" stroke-width=".8"/><path d="M12 7.5 H19 L22 10.5 V21 H12 Z" fill="#f0f4ff" stroke="#607090" stroke-width=".9"/><path d="M13.5 12.5 H20.5 M13.5 14.7 H20.5 M13.5 16.9 H20.5 M13.5 19 H20.5" stroke="#7c9cd8" stroke-width="1"/></svg>
<svg class="i" style="left:110px;top:346px;" width="46" height="46" viewBox="0 0 24 24"><path d="M2.5 1.5 H10 L13 4.5 V15.5 H2.5 Z" fill="#f4f8ff" stroke="#506088" stroke-width=".9"/><path d="M4 5 H10 M4 7.3 H11.5 M4 9.6 H11.5 M4 11.9 H11.5 M4 14 H9" stroke="#6c8cd0" stroke-width="1.1"/><path d="M13.5 7.5 H23 V22 H6 V16.5" fill="#e4ecfc" stroke="#6c88c0" stroke-width="1"/><rect x="13.5" y="7.5" width="9.5" height="2.6" fill="#5c8ce0"/><path d="M6 19.5 H23 V22 H6 Z" fill="#c8d8f4"/></svg>
<svg class="i" style="left:110px;top:389px;" width="46" height="46" viewBox="0 0 24 24"><path d="M2.5 1.5 H10 L13 4.5 V15.5 H2.5 Z" fill="#f4f8ff" stroke="#506088" stroke-width=".9"/><path d="M4 5 H10 M4 7.3 H11.5 M4 9.6 H11.5 M4 11.9 H11.5 M4 14 H9" stroke="#6c8cd0" stroke-width="1.1"/><path d="M13.5 7.5 H23 V22 H6 V16.5" fill="#e4ecfc" stroke="#6c88c0" stroke-width="1"/><rect x="13.5" y="7.5" width="9.5" height="2.6" fill="#5c8ce0"/><path d="M6 19.5 H23 V22 H6 Z" fill="#c8d8f4"/></svg>
<div class="t c" style="left:161px;top:297px;height:61px;line-height:61px;font-size:30.5px;color:#f00;">检测組<span class="m">-0</span></div>
<div class="t c" style="left:161px;top:340px;height:61px;line-height:61px;font-size:30.5px;color:#00f;">参数<span class="m">-0(BASIC)</span></div>
<div class="t c" style="left:161px;top:383px;height:61px;line-height:61px;font-size:30.5px;color:#fff;">参数<span class="m">-1(CCD)</span></div>
<div class="t c" style="left:571px;top:297px;height:61px;line-height:61px;font-size:30.5px;color:#000;">序号</div>
<div class="t c" style="left:698px;top:297px;height:61px;line-height:61px;font-size:30.5px;color:#000;"><span class="m">ID</span></div>
<div class="t c" style="left:790px;top:297px;height:61px;line-height:61px;font-size:30.5px;color:#000;">评定</div>
<div style="left:0px;top:1860px;width:888px;height:3px;background:#606060;"></div>
<svg class="i" style="left:0;top:1860px" width="400" height="46" viewBox="0 0 400 46"><path d="M0 2 H164 L146 38 H0 Z" fill="#fff"/><path d="M0 38.5 H146 L164 2" fill="none" stroke="#000" stroke-width="3"/><path d="M164 2 L146 20 L166 38.5 H325 L346 2" fill="#d4d0c8" stroke="#000" stroke-width="2.5"/></svg>
<div class="t" style="left:-5px;top:1847px;height:62px;line-height:62px;font-size:31px;color:#000;font-weight:bold;letter-spacing:4.5px;">测量结果</div>
<div class="t c" style="left:178px;top:1847.5px;height:61px;line-height:61px;font-size:30.5px;color:#000;">模型管理</div>
<div style="left:0px;top:1902px;width:894px;height:3px;background:#f0eee8;"></div>
<div style="left:890.5px;top:305px;width:3.5px;height:1600px;background:#fbfaf6;"></div>
<div style="left:904.5px;top:303.5px;width:2157.5px;height:1541.5px;background:#d4d2bc;"></div>
<div style="left:904.5px;top:303.5px;width:2154.5px;height:2.7px;background:#8a8880;"></div>
<div style="left:904.5px;top:303.5px;width:3px;height:1541.5px;background:#8a8880;"></div>
<div style="left:907.5px;top:306.2px;width:5.5px;height:1538.8px;background:#e6e4de;"></div>
<div style="left:907.5px;top:306.2px;width:2151.5px;height:4.3px;background:#e6e4de;"></div>
<div style="left:913px;top:310.5px;width:1761px;height:3.5px;background:linear-gradient(180deg,#9a9892,#000);"></div>
<div style="left:913px;top:312px;width:3px;height:1199px;background:linear-gradient(90deg,#9a9892,#000);"></div>
<div style="left:3058.5px;top:305px;width:3.5px;height:1540px;background:#fff;"></div>
<div style="left:913px;top:1840px;width:2149px;height:4px;background:#fff;"></div>
<div style="left:915px;top:313px;width:1757px;height:1197px;background:#000;"></div>
<div style="left:2672px;top:313px;width:3px;height:1200px;background:#eeecd8;"></div>
<div style="left:915px;top:1510px;width:1760px;height:3px;background:#eeecd8;"></div>
<svg class="i" style="left:917px;top:314px" width="1755" height="1196" viewBox="0 0 1755 1196"><line x1="14.4" y1="600" x2="1743" y2="600" stroke="#e01818" stroke-width="3.4" stroke-dasharray="28.5 26.31"/><line x1="879.5" y1="14.3" x2="879.5" y2="1186" stroke="#e01818" stroke-width="3.4" stroke-dasharray="25 24.86"/></svg>
<div style="left:3062px;top:305px;width:446px;height:1540px;background:#dddad3;"></div>
<div style="left:3062px;top:303px;width:446px;height:3px;background:#a8a59d;"></div>
<div style="left:3503px;top:305px;width:3px;height:1540px;background:#8a8880;"></div>
<div style="left:3092px;top:349px;width:383px;height:276px;border:3px solid #b4b1aa;box-sizing:border-box;box-shadow:inset 2px 2px 0 #e8e6e0, 2px 2px 0 #e8e6e0;"></div>
<div style="left:3212px;top:329px;width:150px;height:40px;background:#dddad3;"></div>
<div class="t c" style="left:3222px;top:318.5px;height:61px;line-height:61px;font-size:30.5px;color:#000;">元素类型</div>
<div style="left:3092px;top:658px;width:383px;height:275px;border:3px solid #b4b1aa;box-sizing:border-box;box-shadow:inset 2px 2px 0 #e8e6e0, 2px 2px 0 #e8e6e0;"></div>
<div style="left:3212px;top:638px;width:150px;height:40px;background:#dddad3;"></div>
<div class="t c" style="left:3222px;top:627.5px;height:61px;line-height:61px;font-size:30.5px;color:#000;">测量方式</div>
<div style="left:3092px;top:966px;width:383px;height:276px;border:3px solid #b4b1aa;box-sizing:border-box;box-shadow:inset 2px 2px 0 #e8e6e0, 2px 2px 0 #e8e6e0;"></div>
<div style="left:3245px;top:946px;width:84px;height:40px;background:#dddad3;"></div>
<div class="t c" style="left:3255px;top:935.5px;height:61px;line-height:61px;font-size:30.5px;color:#000;">其它</div>
<div style="left:3119px;top:368px;width:85px;height:77px;background:#ccd0de;border:3.5px solid #0a246a;box-sizing:border-box;"></div>
<div style="left:3119px;top:676.5px;width:85px;height:77px;background:#ccd0de;border:3.5px solid #0a246a;box-sizing:border-box;"></div>
<svg class="i" style="left:3118.5px;top:363.5px;" width="86" height="86" viewBox="0 0 24 24"><line x1="14.60" y1="12.00" x2="16.80" y2="12.00" stroke="#e8d850" stroke-width="0.9" stroke-linecap="round" opacity=".85"/><line x1="12.00" y1="14.60" x2="12.00" y2="16.80" stroke="#e8d850" stroke-width="0.9" stroke-linecap="round" opacity=".85"/><line x1="9.40" y1="12.00" x2="7.20" y2="12.00" stroke="#e8d850" stroke-width="0.9" stroke-linecap="round" opacity=".85"/><line x1="12.00" y1="9.40" x2="12.00" y2="7.20" stroke="#e8d850" stroke-width="0.9" stroke-linecap="round" opacity=".85"/><line x1="13.98" y1="13.98" x2="15.82" y2="15.82" stroke="#58b848" stroke-width="0.7" stroke-linecap="round" opacity=".85"/><line x1="10.02" y1="13.98" x2="8.18" y2="15.82" stroke="#58b848" stroke-width="0.7" stroke-linecap="round" opacity=".85"/><line x1="10.02" y1="10.02" x2="8.18" y2="8.18" stroke="#58b848" stroke-width="0.7" stroke-linecap="round" opacity=".85"/><line x1="13.98" y1="10.02" x2="15.82" y2="8.18" stroke="#58b848" stroke-width="0.7" stroke-linecap="round" opacity=".85"/><circle cx="12" cy="12" r="2.05" fill="url(#rb)"/></svg>
<svg class="i" style="left:3203.5px;top:363.5px;" width="86" height="86" viewBox="0 0 24 24"><path d="M5.8 17.7 L18.2 6.5" fill="none" stroke="#2c9438" stroke-width="1.0" stroke-linecap="round"/><circle cx="5.8" cy="17.7" r="2.05" fill="url(#rb)"/><circle cx="18.2" cy="6.5" r="2.05" fill="url(#rb)"/></svg>
<svg class="i" style="left:3288.5px;top:363.5px;" width="86" height="86" viewBox="0 0 24 24"><ellipse cx="11.7" cy="12" rx="7.9" ry="7.4" fill="none" stroke="#2c9438" stroke-width="1"/><circle cx="8.9" cy="6.3" r="2.05" fill="url(#rb)"/><circle cx="18" cy="14.1" r="2.05" fill="url(#rb)"/><circle cx="8.9" cy="17.7" r="2.05" fill="url(#rb)"/></svg>
<svg class="i" style="left:3373.5px;top:363.5px;" width="86" height="86" viewBox="0 0 24 24"><path d="M17.2 5.8 C11 6.2 7 8 6.6 10.6 C6 14 7.5 16.8 9.6 18.2" fill="none" stroke="#2c9438" stroke-width="1.0" stroke-linecap="round"/><circle cx="17.2" cy="5.8" r="2.05" fill="url(#rb)"/><circle cx="6.6" cy="10.6" r="2.05" fill="url(#rb)"/><circle cx="9.6" cy="18.2" r="2.05" fill="url(#rb)"/></svg>
<svg class="i" style="left:3118.5px;top:441px;" width="86" height="86" viewBox="0 0 24 24"><ellipse cx="12.1" cy="12" rx="9" ry="5.3" fill="none" stroke="#2c9438" stroke-width="1"/><circle cx="5.8" cy="7.9" r="2.05" fill="url(#rb)"/><circle cx="14.4" cy="7.2" r="2.05" fill="url(#rb)"/><circle cx="19.6" cy="12" r="2.05" fill="url(#rb)"/><circle cx="5.8" cy="16.1" r="2.05" fill="url(#rb)"/><circle cx="14.3" cy="16.8" r="2.05" fill="url(#rb)"/></svg>
<svg class="i" style="left:3203.5px;top:441px;" width="86" height="86" viewBox="0 0 24 24"><rect x="4.9" y="7.2" width="14" height="9.8" fill="none" stroke="#2c9438" stroke-width=".9"/><circle cx="8" cy="7.2" r="2.05" fill="url(#rb)"/><circle cx="15.8" cy="7.2" r="2.05" fill="url(#rb)"/><circle cx="4.9" cy="12.8" r="2.05" fill="url(#rb)"/><circle cx="18.9" cy="12.8" r="2.05" fill="url(#rb)"/><circle cx="11.9" cy="17" r="2.05" fill="url(#rb)"/></svg>
<svg class="i" style="left:3288.5px;top:441px;" width="86" height="86" viewBox="0 0 24 24"><path d="M14.3 5 C17.5 6 19 8 18.8 9.9 C18.4 12 15.5 12.9 12.7 12.7 C9 12.4 5.6 12.2 5 14.1 C4.5 16.4 6.5 18.2 8.9 19" fill="none" stroke="#2c9438" stroke-width="1.0" stroke-linecap="round"/><circle cx="14.3" cy="5" r="2.05" fill="url(#rb)"/><circle cx="18.8" cy="9.9" r="2.05" fill="url(#rb)"/><circle cx="12.7" cy="12.7" r="2.05" fill="url(#rb)"/><circle cx="5" cy="14.1" r="2.05" fill="url(#rb)"/><circle cx="8.9" cy="19" r="2.05" fill="url(#rb)"/></svg>
<svg class="i" style="left:3373.5px;top:441px;" width="86" height="86" viewBox="0 0 24 24"><path d="M2 12.7 L13.7 7 L21.7 11.3 L9.9 16.6 Z" fill="#dcfae4" stroke="#28c040" stroke-width=".6"/><path d="M2 12.7 L9.9 16.6 L21.7 11.3 V12.3 L9.9 17.8 L2 13.8 Z" fill="#28c040"/><circle cx="8.9" cy="9.2" r="2.05" fill="url(#rb)"/><circle cx="17.2" cy="9.2" r="2.05" fill="url(#rb)"/><circle cx="8" cy="14.9" r="2.05" fill="url(#rb)"/></svg>
<svg class="i" style="left:3118.5px;top:518.5px;" width="86" height="86" viewBox="0 0 24 24"><circle cx="7.2" cy="9.1" r="2.05" fill="url(#rb)"/><circle cx="7.2" cy="13.2" r="2.05" fill="url(#rb)"/><circle cx="7.2" cy="17.4" r="2.05" fill="url(#rb)"/><circle cx="12" cy="7.5" r="2.05" fill="url(#rb)"/><circle cx="12" cy="11.7" r="2.05" fill="url(#rb)"/><circle cx="12" cy="16" r="2.05" fill="url(#rb)"/><circle cx="16.6" cy="6.1" r="2.05" fill="url(#rb)"/><circle cx="16.6" cy="10.5" r="2.05" fill="url(#rb)"/><circle cx="16.6" cy="14.8" r="2.05" fill="url(#rb)"/></svg>
<svg class="i" style="left:3118.5px;top:672px;" width="86" height="86" viewBox="0 0 24 24"><path d="M3.4 14.8 C6 13 6.5 7.5 9 6 C11.5 4.2 14.5 4 16.1 4.6" fill="none" stroke="#5058a8" stroke-width="1.1" stroke-linecap="round"/><circle cx="12.7" cy="9.2" r="1.5" fill="url(#lb)"/><circle cx="9.6" cy="6.5" r="2.05" fill="url(#rb)"/><g transform="translate(14.1,9.9) scale(0.82)"><path d="M0 0 L0 11 L2.6 8.6 L4.6 13 L6.4 12.2 L4.4 7.8 L7.8 7.8 Z" fill="#fff" stroke="#000" stroke-width=".8" stroke-linejoin="round"/></g></svg>
<svg class="i" style="left:3203.5px;top:672px;" width="86" height="86" viewBox="0 0 24 24"><circle cx="8.9" cy="6.5" r="2.05" fill="url(#rb)"/><g transform="translate(9.2,8.6) scale(0.82)"><path d="M0 0 L0 11 L2.6 8.6 L4.6 13 L6.4 12.2 L4.4 7.8 L7.8 7.8 Z" fill="#fff" stroke="#000" stroke-width=".8" stroke-linejoin="round"/></g></svg>
<svg class="i" style="left:3288.5px;top:672px;" width="86" height="86" viewBox="0 0 24 24"><rect x="4.2" y="5.9" width="15.4" height="11.8" fill="none" stroke="#1818c0" stroke-width=".9" stroke-dasharray="1.4 .9"/></svg>
<svg class="i" style="left:3373.5px;top:672px;" width="86" height="86" viewBox="0 0 24 24"><rect x="4.2" y="5.9" width="15.4" height="11.8" fill="none" stroke="#1818c0" stroke-width=".9" stroke-dasharray="1.4 .9"/><rect x="12.5" y="4.5" width="4.5" height="3" fill="#dddad3"/><rect x="12.5" y="16.2" width="4.5" height="3" fill="#dddad3"/><path d="M11.5 5.9 H15 M11.5 17.7 H15" stroke="#1818c0" stroke-width=".9"/><path d="M17 5.9 L14.3 4.3 V7.5 Z M17 17.7 L14.3 16.1 V19.3 Z" fill="#1818c0"/></svg>
<svg class="i" style="left:3118.5px;top:750.5px;" width="86" height="86" viewBox="0 0 24 24"><path d="M3.4 16.8 C8.5 17.5 9.8 13.5 11.5 10.5 C13.5 7 17 6 20.6 6.6" fill="none" stroke="#5058a8" stroke-width="1.2" stroke-linecap="round"/><circle cx="15.1" cy="13" r="1.75" fill="url(#lb)"/><circle cx="12" cy="10.4" r="2.05" fill="url(#rb)"/></svg>
<svg class="i" style="left:3203.5px;top:750.5px;" width="86" height="86" viewBox="0 0 24 24"><circle cx="14.1" cy="6.5" r="1.75" fill="url(#lb)"/><circle cx="19.9" cy="7.2" r="1.75" fill="url(#lb)"/><circle cx="7.2" cy="13" r="1.75" fill="url(#lb)"/><circle cx="7.5" cy="17.9" r="1.75" fill="url(#lb)"/><path d="M3.7 18.9 L19.9 4.8" fill="none" stroke="#2020b0" stroke-width="0.9" stroke-linecap="round"/><circle cx="11.9" cy="11.7" r="2.05" fill="url(#rb)"/></svg>
<svg class="i" style="left:3288.5px;top:750.5px;" width="86" height="86" viewBox="0 0 24 24"><circle cx="14.4" cy="6.5" r="1.75" fill="url(#lb)"/><circle cx="19.9" cy="7.5" r="1.75" fill="url(#lb)"/><circle cx="6.8" cy="13" r="1.75" fill="url(#lb)"/><circle cx="6.5" cy="18.2" r="1.75" fill="url(#lb)"/><path d="M7.2 19.9 C5.5 12.5 11.5 8 21.3 7.5" fill="none" stroke="#5058a8" stroke-width="1.2" stroke-linecap="round"/><circle cx="11.1" cy="10.3" r="2.05" fill="url(#rb)"/></svg>
<svg class="i" style="left:3373.5px;top:750.5px;" width="86" height="86" viewBox="0 0 24 24"><circle cx="11.9" cy="6.8" r="1.75" fill="url(#lb)"/><circle cx="16.1" cy="12.7" r="1.75" fill="url(#lb)"/><circle cx="12.7" cy="15.8" r="1.75" fill="url(#lb)"/><path d="M4.4 11.5 H19.2 M11.9 5.1 V18.2" fill="none" stroke="#2020b0" stroke-width="1.0" stroke-linecap="round"/><circle cx="11.9" cy="11.5" r="2.05" fill="url(#rb)"/></svg>
<svg class="i" style="left:3118.5px;top:827.5px;" width="86" height="86" viewBox="0 0 24 24"><circle cx="11" cy="7.5" r="1.75" fill="url(#lb)"/><circle cx="12.7" cy="12.3" r="1.75" fill="url(#lb)"/><circle cx="12.7" cy="15.8" r="1.75" fill="url(#lb)"/><circle cx="17.9" cy="16.5" r="1.75" fill="url(#lb)"/><path d="M3.4 7.2 C9 5.5 10 10.5 12.3 14 C14.5 17.3 18 17.2 20.6 16.8" fill="none" stroke="#5058a8" stroke-width="1.2" stroke-linecap="round"/><path d="M6.5 16.5 V11.5" stroke="#1818b0" stroke-width=".9"/><path d="M6.5 9.9 L4.8 12.4 H8.2 Z" fill="#1818b0"/><circle cx="6.5" cy="7" r="2.05" fill="url(#rb)"/></svg>
<svg class="i" style="left:3203.5px;top:827.5px;" width="86" height="86" viewBox="0 0 24 24"><circle cx="5.4" cy="6.8" r="1.75" fill="url(#lb)"/><circle cx="11.3" cy="7.2" r="1.75" fill="url(#lb)"/><circle cx="11.3" cy="12.3" r="1.75" fill="url(#lb)"/><circle cx="13.4" cy="16.1" r="1.75" fill="url(#lb)"/><path d="M3.4 6.5 C9.5 6 10.5 10.5 12.3 13.5 C14 16.3 16 17 17.9 16.8" fill="none" stroke="#5058a8" stroke-width="1.2" stroke-linecap="round"/><path d="M18 7.5 V12.5" stroke="#1818b0" stroke-width=".9"/><path d="M18 14.1 L16.3 11.6 H19.7 Z" fill="#1818b0"/><circle cx="18" cy="16.8" r="2.05" fill="url(#rb)"/></svg>
<svg class="i" style="left:3288.5px;top:827.5px;" width="86" height="86" viewBox="0 0 24 24"><circle cx="9.5" cy="5.6" r="1.85" fill="url(#gb)"/><circle cx="13.8" cy="7.3" r="1.85" fill="url(#gb)"/><circle cx="16.5" cy="6.8" r="1.85" fill="url(#gb)"/><circle cx="5" cy="9.2" r="1.85" fill="url(#gb)"/><circle cx="8" cy="8.8" r="1.85" fill="url(#gb)"/><circle cx="10.7" cy="10.3" r="1.85" fill="url(#gb)"/><circle cx="14.5" cy="10.2" r="1.85" fill="url(#gb)"/><circle cx="17" cy="9.5" r="1.85" fill="url(#gb)"/><circle cx="18.8" cy="11.8" r="1.85" fill="url(#gb)"/><circle cx="7" cy="13.8" r="1.85" fill="url(#gb)"/><circle cx="9.5" cy="12.8" r="1.85" fill="url(#gb)"/><circle cx="15" cy="13.6" r="1.85" fill="url(#gb)"/><circle cx="18.3" cy="14.2" r="1.85" fill="url(#gb)"/><circle cx="10" cy="16" r="1.85" fill="url(#gb)"/><circle cx="12.5" cy="15.6" r="1.85" fill="url(#gb)"/><circle cx="14.5" cy="17.8" r="1.85" fill="url(#gb)"/><circle cx="6.5" cy="11.5" r="1.85" fill="url(#gb)"/><circle cx="11.8" cy="12" r="2.05" fill="url(#rb)"/></svg>
<svg class="i" style="left:3373.5px;top:827.5px;" width="86" height="86" viewBox="0 0 24 24"><circle cx="9.5" cy="5.6" r="1.85" fill="url(#lb)"/><circle cx="13.8" cy="7.3" r="1.85" fill="url(#lb)"/><circle cx="16.5" cy="6.8" r="1.85" fill="url(#lb)"/><circle cx="5" cy="9.2" r="1.85" fill="url(#lb)"/><circle cx="8" cy="8.8" r="1.85" fill="url(#lb)"/><circle cx="10.7" cy="10.3" r="1.85" fill="url(#lb)"/><circle cx="14.5" cy="10.2" r="1.85" fill="url(#lb)"/><circle cx="17" cy="9.5" r="1.85" fill="url(#lb)"/><circle cx="18.8" cy="11.8" r="1.85" fill="url(#lb)"/><circle cx="7" cy="13.8" r="1.85" fill="url(#lb)"/><circle cx="9.5" cy="12.8" r="1.85" fill="url(#lb)"/><circle cx="15" cy="13.6" r="1.85" fill="url(#lb)"/><circle cx="18.3" cy="14.2" r="1.85" fill="url(#lb)"/><circle cx="10" cy="16" r="1.85" fill="url(#lb)"/><circle cx="12.5" cy="15.6" r="1.85" fill="url(#lb)"/><circle cx="14.5" cy="17.8" r="1.85" fill="url(#lb)"/><circle cx="6.5" cy="11.5" r="1.85" fill="url(#lb)"/><circle cx="11.8" cy="12" r="2.05" fill="url(#rb)"/></svg>
<svg class="i" style="left:3118.5px;top:980px;" width="86" height="86" viewBox="0 0 24 24"><path d="M8.8 4.8 V19.2 M15 4.8 V19.2 M3.7 9.4 H20.3 M3.7 14.9 H20.3" stroke="#c01010" stroke-width="1.15"/></svg>
<svg class="i" style="left:3203.5px;top:980px;" width="86" height="86" viewBox="0 0 24 24"><path d="M12 4.1 V19.9 M3.2 12 H20.8 M5.4 6.1 L18.6 17.9 M18.6 6.1 L5.4 17.9" stroke="#c01010" stroke-width=".8"/><circle cx="12" cy="12" r=".9" fill="#c01010"/></svg>
<svg class="i" style="left:3288.5px;top:980px;" width="86" height="86" viewBox="0 0 24 24"><circle cx="12" cy="12" r="8.6" fill="none" stroke="#b82828" stroke-width=".95"/><circle cx="12" cy="12" r="4.7" fill="none" stroke="#b82828" stroke-width=".95"/><path d="M11.2 12 L12 11.2 L12.8 12 L12 12.8 Z" fill="#c01010"/></svg>
<svg class="i" style="left:3373.5px;top:980px;" width="86" height="86" viewBox="0 0 24 24"><circle cx="12" cy="11.8" r="8.1" fill="none" stroke="#b82828" stroke-width=".95"/><path d="M12 8.7 V14.9 M8.9 11.8 H15.1" stroke="#c01010" stroke-width="1.5"/></svg>
<svg class="i" style="left:3118.5px;top:1058px;" width="86" height="86" viewBox="0 0 24 24"><path d="M5.1 5.1 H12 L15.5 8.6 V18.9 H5.1 Z" fill="#f4f4f4" stroke="#d0d0d0" stroke-width=".5"/><path d="M6.3 7 H9.8 M6.3 8.6 H9.8 M7.2 6 V9.6 M8.9 6 V9.6" stroke="#a8a8a8" stroke-width=".7"/><path d="M6 11.5 H14.5 M6 13.1 H14.5 M6 14.7 H14.5 M6 16.3 H14.5 M6 17.9 H14.5" stroke="#b8b8b8" stroke-width=".7"/><rect x="15.3" y="10.2" width="3.6" height="3.6" fill="#f4f4f4" stroke="#b0b0b0" stroke-width=".7"/><rect x="16.5" y="11.4" width="1.2" height="1.2" fill="#a0a0a0"/><rect x="15" y="15" width="4.2" height="4" fill="#b8b8b8"/><path d="M15.8 17 L16.8 18.2 L18.4 15.8" fill="none" stroke="#fff" stroke-width=".9"/></svg>
<svg class="i" style="left:3203.5px;top:1058px;" width="86" height="86" viewBox="0 0 24 24"><path d="M6 15 H18 L20 19.4 H4 Z" fill="#fce8e8" stroke="#b01010" stroke-width=".9"/><path d="M4 19.3 H20" stroke="#b01010" stroke-width="1.3"/><path d="M4.6 6.6 H19.4 L12 17.6 Z" fill="url(#cn)" stroke="#5c88c0" stroke-width=".6"/><path d="M3.9 5.1 H20.1 V6.3 C20.1 8.4 15.5 9.5 12 9.5 C8.5 9.5 3.9 8.4 3.9 6.3 Z" fill="url(#ln)" stroke="#5c88c8" stroke-width=".6"/></svg>
<svg class="i" style="left:3288.5px;top:1058px;" width="86" height="86" viewBox="0 0 24 24"><path d="M4.6 6.6 H19.4 L12 17.6 Z" fill="url(#cn)" stroke="#5c88c0" stroke-width=".6"/><path d="M3.9 5.1 H20.1 V6.3 C20.1 8.4 15.5 9.5 12 9.5 C8.5 9.5 3.9 8.4 3.9 6.3 Z" fill="url(#ln)" stroke="#5c88c8" stroke-width=".6"/><path d="M4.5 18.6 H19.5" stroke="#a01818" stroke-width=".8"/><rect x="4" y="17.8" width="1.6" height="1.6" fill="#901010"/><rect x="18.4" y="17.8" width="1.6" height="1.6" fill="#901010"/></svg>
<svg class="i" style="left:3373.5px;top:1058px;" width="86" height="86" viewBox="0 0 24 24"><path d="M6 18.9 C12 18.4 11 5.2 18.5 4.6 H19.9 V18.9 Z" fill="url(#bd)" stroke="#7880b0" stroke-width=".5"/><path d="M6 18.9 C12 18.4 11 5.2 18.5 4.6" fill="none" stroke="#b84040" stroke-width=".8"/><circle cx="10.6" cy="16" r="1.1" fill="url(#lb)"/><circle cx="12.6" cy="11.5" r="1.1" fill="url(#lb)"/><circle cx="14.9" cy="6.6" r="1.1" fill="url(#lb)"/><path d="M3.9 16.8 C7.5 15 9.3 11 9.4 7.2" fill="none" stroke="#28904c" stroke-width="1.1"/><path d="M9.6 4.4 L7.2 8 L11.8 8.3 Z" fill="#28904c"/><path d="M19.9 4.6 V18.9 H6" fill="none" stroke="#6870a8" stroke-width=".8"/></svg>
<svg class="i" style="left:3118.5px;top:1137px;" width="86" height="86" viewBox="0 0 24 24"><rect x="6.3" y="4.8" width="11.4" height="14.4" fill="url(#bh)" stroke="#5c8cd0" stroke-width=".6" opacity=".75"/><rect x="6.6" y="8.6" width="10.8" height="7" fill="#eaf2ff" opacity=".85"/><rect x="3.2" y="8.5" width="17.4" height="7.2" fill="none" stroke="#b03030" stroke-width=".8"/><path d="M6.5 12.1 H9 M15 12.1 H17.5" stroke="#a02020" stroke-width=".8"/><path d="M5.8 12.1 L7.6 10.9 V13.3 Z M18.2 12.1 L16.4 10.9 V13.3 Z" fill="#a02020"/><text x="10.2" y="14" font-family="Liberation Sans, sans-serif" font-size="5.8" font-weight="bold" fill="#a02020">d</text></svg>
<div style="left:894px;top:1845px;width:2614px;height:3px;background:#000;"></div>
<div style="left:905px;top:1848px;width:2603px;height:57px;background:#ece9e3;"></div>
<div style="left:894px;top:1845px;width:18px;height:60px;background:#d4d0c8;"></div>
<div style="left:905px;top:1845px;width:4px;height:60px;background:#f4f2ec;"></div>
<div style="left:912px;top:1845px;width:163px;height:56px;background:#d4d0c8;border-right:4px solid #000;border-bottom:4px solid #000;box-sizing:border-box;"></div>
<div class="t c" style="left:926px;top:1844.5px;height:61px;line-height:61px;font-size:30.5px;color:#000;">影像窗口</div>
<div class="t c" style="left:1092px;top:1844.5px;height:61px;line-height:61px;font-size:30.5px;color:#8a8880;"><span class="l">CAD</span>窗口</div>
<div class="t c" style="left:1257px;top:1844.5px;height:61px;line-height:61px;font-size:30.5px;color:#8a8880;">测量程序</div>
<div style="left:1238px;top:1858px;width:3px;height:34px;background:#a09d95;"></div>
<div style="left:1406px;top:1858px;width:3px;height:34px;background:#a09d95;"></div>
<div style="left:146px;top:1923px;width:418px;height:75px;background:#d4d0c8;box-shadow:inset 3px 3px 0 #808080, inset -3px -3px 0 #fff, inset 5.5px 5.5px 0 #404040;"></div>
<div style="left:581px;top:1920px;width:95px;height:82px;background:#d4d0c8;border:3px solid #605e5a;box-sizing:border-box;"></div>
<svg class="i" style="left:591px;top:1923px;" width="78" height="78" viewBox="0 0 24 24"><path d="M4 12.5 L9.5 17.5 L20 5.2 L20.3 8 L10 20 L4 14.5 Z" fill="#e83428" stroke="#f08880" stroke-width=".4"/></svg>
<div style="left:795px;top:1923px;width:212px;height:75px;background:#d4d0c8;box-shadow:inset 3px 3px 0 #808080, inset -3px -3px 0 #fff, inset 5.5px 5.5px 0 #404040;"></div>
<div class="t s2" style="left:880px;top:1901px;height:98px;line-height:98px;font-size:49px;color:#000;font-weight:bold;">O</div>
<div style="left:1025px;top:1920px;width:96px;height:82px;background:#d4d0c8;border:3px solid #605e5a;box-sizing:border-box;"></div>
<svg class="i" style="left:1023.5px;top:1920.5px;" width="95" height="95" viewBox="0 0 24 24"><path d="M9.5 6.2 L13 2.6 L19.5 2.8 L15.8 6.6 Z" fill="#fce4e8" stroke="#c86070" stroke-width=".6"/><path d="M9.5 6.2 L15.8 6.6 L14.6 9.4 L8.4 9 Z" fill="#f4b0bc" stroke="#c86070" stroke-width=".6"/><path d="M15.8 6.6 L19.5 2.8 L18.6 5.2 L14.6 9.4 Z" fill="#e08898" stroke="#c86070" stroke-width=".5"/><circle cx="7" cy="13.2" r="1.45" fill="url(#rb)"/><circle cx="10.5" cy="12.6" r="1.45" fill="url(#rb)"/><circle cx="14" cy="12" r="1.45" fill="url(#rb)"/><circle cx="9" cy="15" r="1.45" fill="url(#rb)"/><circle cx="12.6" cy="14.6" r="1.45" fill="url(#rb)"/><circle cx="16.3" cy="14.3" r="1.45" fill="url(#rb)"/><circle cx="8.6" cy="17.6" r="1.45" fill="url(#rb)"/><circle cx="12.2" cy="17.4" r="1.45" fill="url(#rb)"/></svg>
<div style="left:1222px;top:1920px;width:96px;height:82px;background:#d4d0c8;border:3px solid #605e5a;box-sizing:border-box;"></div>
<div class="t" style="left:1232px;top:1906px;height:112px;line-height:112px;font-size:56px;color:#0cb80c;font-weight:bold;letter-spacing:-2px;transform:scaleX(.88);transform-origin:0 50%;">OK</div>
<div style="left:0px;top:2013px;width:1577px;height:37px;background:#d4d0c8;"></div>
<div style="left:0px;top:2011px;width:1577px;height:3px;background:#f0eee8;"></div>
<div style="left:0px;top:2048px;width:1577px;height:4px;background:#404040;"></div>
<div style="left:94px;top:2014px;width:3px;height:36px;background:#404040;"></div>
<div style="left:97px;top:2014px;width:3px;height:36px;background:#fff;"></div>
<div style="left:261px;top:2014px;width:3px;height:36px;background:#404040;"></div>
<div style="left:264px;top:2014px;width:3px;height:36px;background:#fff;"></div>
<div style="left:477px;top:2014px;width:3px;height:36px;background:#404040;"></div>
<div style="left:480px;top:2014px;width:3px;height:36px;background:#fff;"></div>
<div style="left:694px;top:2014px;width:3px;height:36px;background:#404040;"></div>
<div style="left:697px;top:2014px;width:3px;height:36px;background:#fff;"></div>
<div style="left:910px;top:2014px;width:3px;height:36px;background:#404040;"></div>
<div style="left:913px;top:2014px;width:3px;height:36px;background:#fff;"></div>
<div style="left:1127px;top:2014px;width:3px;height:36px;background:#404040;"></div>
<div style="left:1130px;top:2014px;width:3px;height:36px;background:#fff;"></div>
<div style="left:1343px;top:2014px;width:3px;height:36px;background:#404040;"></div>
<div style="left:1346px;top:2014px;width:3px;height:36px;background:#fff;"></div>
<div style="left:1560px;top:2014px;width:3px;height:36px;background:#404040;"></div>
<div style="left:1563px;top:2014px;width:3px;height:36px;background:#fff;"></div>
<div class="t c" style="left:148.6px;top:2002.5px;height:61px;line-height:61px;font-size:30.5px;color:#000;">项目</div>
<div class="t c" style="left:323.65px;top:2002.5px;height:61px;line-height:61px;font-size:30.5px;color:#000;">实际值</div>
<div class="t c" style="left:540.15px;top:2002.5px;height:61px;line-height:61px;font-size:30.5px;color:#000;">名义值</div>
<div class="t c" style="left:773.1px;top:2002.5px;height:61px;line-height:61px;font-size:30.5px;color:#000;">偏差</div>
<div class="t c" style="left:973.15px;top:2002.5px;height:61px;line-height:61px;font-size:30.5px;color:#000;">正公差</div>
<div class="t c" style="left:1189.65px;top:2002.5px;height:61px;line-height:61px;font-size:30.5px;color:#000;">负公差</div>
<div class="t c" style="left:1422.6px;top:2002.5px;height:61px;line-height:61px;font-size:30.5px;color:#000;">评定</div>
<div style="left:0px;top:2052px;width:48px;height:357px;background:#c0bdb6;"></div>
<div style="left:48px;top:2052px;width:1530px;height:359px;background:#fff;"></div>
<div style="left:48px;top:2093.5px;width:1515px;height:3px;background:#d4d0c8;"></div>
<div style="left:48px;top:2138.5px;width:1515px;height:3px;background:#d4d0c8;"></div>
<div style="left:48px;top:2183.5px;width:1515px;height:3px;background:#d4d0c8;"></div>
<div style="left:48px;top:2228.5px;width:1515px;height:3px;background:#d4d0c8;"></div>
<div style="left:48px;top:2273px;width:1515px;height:3px;background:#d4d0c8;"></div>
<div style="left:48px;top:2318px;width:1515px;height:3px;background:#d4d0c8;"></div>
<div style="left:48px;top:2362.5px;width:1515px;height:3px;background:#d4d0c8;"></div>
<div style="left:48px;top:2406.5px;width:1515px;height:3px;background:#d4d0c8;"></div>
<div style="left:95.5px;top:2052px;width:3px;height:357px;background:#d4d0c8;"></div>
<div style="left:262.5px;top:2052px;width:3px;height:357px;background:#d4d0c8;"></div>
<div style="left:478.5px;top:2052px;width:3px;height:357px;background:#d4d0c8;"></div>
<div style="left:695.5px;top:2052px;width:3px;height:357px;background:#d4d0c8;"></div>
<div style="left:911.5px;top:2052px;width:3px;height:357px;background:#d4d0c8;"></div>
<div style="left:1128.5px;top:2052px;width:3px;height:357px;background:#d4d0c8;"></div>
<div style="left:1344.5px;top:2052px;width:3px;height:357px;background:#d4d0c8;"></div>
<div style="left:1561.5px;top:2052px;width:3px;height:357px;background:#d4d0c8;"></div>
<div style="left:1631px;top:1938px;width:583px;height:474px;border:2.6px solid #66645e;box-sizing:border-box;box-shadow:inset 2.4px 2.4px 0 #f4f2ec, 2.4px 2.4px 0 #f4f2ec;"></div>
<div style="left:1646px;top:1918px;width:149px;height:40px;background:#d4d0c8;"></div>
<div class="t c" style="left:1654px;top:1907.5px;height:61px;line-height:61px;font-size:30.5px;color:#000;">灯光配置</div>
<div style="left:2266px;top:1938px;width:584px;height:474px;border:2.6px solid #66645e;box-sizing:border-box;box-shadow:inset 2.4px 2.4px 0 #f4f2ec, 2.4px 2.4px 0 #f4f2ec;"></div>
<div style="left:2282px;top:1918px;width:149px;height:40px;background:#d4d0c8;"></div>
<div class="t c" style="left:2290px;top:1907.5px;height:61px;line-height:61px;font-size:30.5px;color:#000;">放大图像</div>
<div style="left:2903px;top:1938px;width:583px;height:474px;border:2.6px solid #66645e;box-sizing:border-box;box-shadow:inset 2.4px 2.4px 0 #f4f2ec, 2.4px 2.4px 0 #f4f2ec;"></div>
<div style="left:2919px;top:1918px;width:82px;height:40px;background:#d4d0c8;"></div>
<div class="t c" style="left:2927px;top:1907.5px;height:61px;line-height:61px;font-size:30.5px;color:#000;">坐标</div>
<div style="left:1825px;top:1991px;width:222px;height:4px;background:#55534e;"></div>
<div style="left:1825px;top:1995px;width:222px;height:4px;background:#fff;"></div>
<svg class="i" style="left:1793px;top:1966px" width="36" height="56" viewBox="0 0 36 56"><path d="M3 16 L17 2 L31 16 V53 H3 Z" fill="#d4d0c8"/><path d="M3 53 V16 L17 2" fill="none" stroke="#fff" stroke-width="3"/><path d="M17 2 L31 16 V53 H3" fill="none" stroke="#404040" stroke-width="3"/><path d="M28 17 V50 H6" fill="none" stroke="#808080" stroke-width="3"/></svg>
<div style="left:2069px;top:1977px;width:99px;height:36px;background:#d4d0c8;box-shadow:inset 3px 3px 0 #808080, inset -3px -3px 0 #fff;"></div>
<div class="t" style="left:2109px;top:1967px;height:60px;line-height:60px;font-size:30px;color:#000;">0</div>
<div style="left:1825px;top:2058px;width:222px;height:4px;background:#55534e;"></div>
<div style="left:1825px;top:2062px;width:222px;height:4px;background:#fff;"></div>
<svg class="i" style="left:1793px;top:2033px" width="36" height="56" viewBox="0 0 36 56"><path d="M3 16 L17 2 L31 16 V53 H3 Z" fill="#d4d0c8"/><path d="M3 53 V16 L17 2" fill="none" stroke="#fff" stroke-width="3"/><path d="M17 2 L31 16 V53 H3" fill="none" stroke="#404040" stroke-width="3"/><path d="M28 17 V50 H6" fill="none" stroke="#808080" stroke-width="3"/></svg>
<div style="left:2069px;top:2045px;width:99px;height:36px;background:#d4d0c8;box-shadow:inset 3px 3px 0 #808080, inset -3px -3px 0 #fff;"></div>
<div class="t" style="left:2109px;top:2035px;height:60px;line-height:60px;font-size:30px;color:#000;">0</div>
<div style="left:1825px;top:2334px;width:222px;height:4px;background:#55534e;"></div>
<div style="left:1825px;top:2338px;width:222px;height:4px;background:#fff;"></div>
<svg class="i" style="left:1793px;top:2309px" width="36" height="56" viewBox="0 0 36 56"><path d="M3 16 L17 2 L31 16 V53 H3 Z" fill="#d4d0c8"/><path d="M3 53 V16 L17 2" fill="none" stroke="#fff" stroke-width="3"/><path d="M17 2 L31 16 V53 H3" fill="none" stroke="#404040" stroke-width="3"/><path d="M28 17 V50 H6" fill="none" stroke="#808080" stroke-width="3"/></svg>
<div style="left:2069px;top:2321px;width:99px;height:36px;background:#d4d0c8;box-shadow:inset 3px 3px 0 #808080, inset -3px -3px 0 #fff;"></div>
<div class="t" style="left:2109px;top:2311px;height:60px;line-height:60px;font-size:30px;color:#000;">0</div>
<svg class="i" style="left:1690px;top:1963px;" width="66" height="66" viewBox="0 0 24 24"><defs><linearGradient id="l1" x1="0" y1="0" x2="0" y2="1"><stop offset="0" stop-color="#d8d8d4"/><stop offset=".7" stop-color="#fafafa"/><stop offset="1" stop-color="#e8f0f8"/></linearGradient></defs><path d="M3 3 H21 V16 H3 Z" fill="url(#l1)"/><path d="M0 17.5 C4 14.5 20 14.5 24 17.5 V20.5 H0 Z" fill="#2c78b8"/><path d="M1.5 18 C6 15.8 18 15.8 22.5 18 C18 19 6 19 1.5 18 Z" fill="#e4f4ff"/><path d="M0 20.8 H24" stroke="#1c5890" stroke-width="1"/></svg>
<svg class="i" style="left:1695px;top:2035px;" width="56" height="56" viewBox="0 0 24 24"><path d="M11.3 1 H12.7 V13 H11.3 Z" fill="#c01818"/><path d="M11.8 1 V13" stroke="#fff" stroke-width=".4"/><path d="M4.5 13.5 L8.5 16.2 M19.5 13.5 L15.5 16.2 M4.5 22 L8.5 19.5 M19.5 22 L15.5 19.5" stroke="#38b838" stroke-width="1"/><path d="M12 20.5 V23.5" stroke="#e8c040" stroke-width="1"/><ellipse cx="12" cy="17.5" rx="2.6" ry="2.2" fill="url(#rb)"/></svg>
<svg class="i" style="left:1689px;top:2306px;" width="68" height="68" viewBox="0 0 24 24"><ellipse cx="12" cy="12.2" rx="11" ry="7.8" fill="#eef4f8" stroke="#5890b8" stroke-width="1.1"/><ellipse cx="12" cy="12.2" rx="9.6" ry="6.6" fill="none" stroke="#c0d0dc" stroke-width="1.6" stroke-dasharray="1 1"/><ellipse cx="12" cy="12.2" rx="7" ry="4.6" fill="none" stroke="#d0dce4" stroke-width="1.4" stroke-dasharray="1 1"/><ellipse cx="12" cy="12.2" rx="2.6" ry="1.9" fill="#c8e0f0"/><path d="M12 4.5 V9 M12 15.5 V20 M1.5 12.2 H8 M16 12.2 H22.5" stroke="#101820" stroke-width="1.1"/></svg>
<svg class="i" style="left:1847px;top:2098.5px;" width="190" height="190" viewBox="0 0 24 24"><circle cx="21.89" cy="13.99" r=".8" fill="#b4c8d6" stroke="#58788f" stroke-width=".3"/><circle cx="21.98" cy="15.33" r=".8" fill="#b4c8d6" stroke="#58788f" stroke-width=".3"/><circle cx="21.45" cy="16.62" r=".8" fill="#b4c8d6" stroke="#58788f" stroke-width=".3"/><circle cx="20.18" cy="17.07" r=".8" fill="#b4c8d6" stroke="#58788f" stroke-width=".3"/><circle cx="20.44" cy="15.66" r=".8" fill="#b4c8d6" stroke="#58788f" stroke-width=".3"/><circle cx="20.47" cy="14.27" r=".8" fill="#b4c8d6" stroke="#58788f" stroke-width=".3"/><circle cx="20.17" cy="13.17" r=".8" fill="#b4c8d6" stroke="#58788f" stroke-width=".3"/><circle cx="19.31" cy="14.22" r=".8" fill="#b4c8d6" stroke="#58788f" stroke-width=".3"/><circle cx="19.05" cy="15.63" r=".8" fill="#b4c8d6" stroke="#58788f" stroke-width=".3"/><circle cx="17.40" cy="19.94" r=".8" fill="#b4c8d6" stroke="#58788f" stroke-width=".3"/><circle cx="16.52" cy="20.96" r=".8" fill="#b4c8d6" stroke="#58788f" stroke-width=".3"/><circle cx="15.22" cy="21.49" r=".8" fill="#b4c8d6" stroke="#58788f" stroke-width=".3"/><circle cx="14.01" cy="20.91" r=".8" fill="#b4c8d6" stroke="#58788f" stroke-width=".3"/><circle cx="15.19" cy="20.10" r=".8" fill="#b4c8d6" stroke="#58788f" stroke-width=".3"/><circle cx="16.20" cy="19.14" r=".8" fill="#b4c8d6" stroke="#58788f" stroke-width=".3"/><circle cx="16.76" cy="18.15" r=".8" fill="#b4c8d6" stroke="#58788f" stroke-width=".3"/><circle cx="15.41" cy="18.28" r=".8" fill="#b4c8d6" stroke="#58788f" stroke-width=".3"/><circle cx="14.23" cy="19.09" r=".8" fill="#b4c8d6" stroke="#58788f" stroke-width=".3"/><circle cx="9.74" cy="21.24" r=".8" fill="#b4c8d6" stroke="#58788f" stroke-width=".3"/><circle cx="8.41" cy="21.34" r=".8" fill="#b4c8d6" stroke="#58788f" stroke-width=".3"/><circle cx="7.11" cy="20.80" r=".8" fill="#b4c8d6" stroke="#58788f" stroke-width=".3"/><circle cx="6.66" cy="19.53" r=".8" fill="#b4c8d6" stroke="#58788f" stroke-width=".3"/><circle cx="8.07" cy="19.79" r=".8" fill="#b4c8d6" stroke="#58788f" stroke-width=".3"/><circle cx="9.46" cy="19.83" r=".8" fill="#b4c8d6" stroke="#58788f" stroke-width=".3"/><circle cx="10.56" cy="19.53" r=".8" fill="#b4c8d6" stroke="#58788f" stroke-width=".3"/><circle cx="9.52" cy="18.66" r=".8" fill="#b4c8d6" stroke="#58788f" stroke-width=".3"/><circle cx="8.11" cy="18.40" r=".8" fill="#b4c8d6" stroke="#58788f" stroke-width=".3"/><circle cx="3.41" cy="17.13" r=".8" fill="#b4c8d6" stroke="#58788f" stroke-width=".3"/><circle cx="2.40" cy="16.25" r=".8" fill="#b4c8d6" stroke="#58788f" stroke-width=".3"/><circle cx="1.86" cy="14.96" r=".8" fill="#b4c8d6" stroke="#58788f" stroke-width=".3"/><circle cx="2.44" cy="13.74" r=".8" fill="#b4c8d6" stroke="#58788f" stroke-width=".3"/><circle cx="3.25" cy="14.92" r=".8" fill="#b4c8d6" stroke="#58788f" stroke-width=".3"/><circle cx="4.21" cy="15.93" r=".8" fill="#b4c8d6" stroke="#58788f" stroke-width=".3"/><circle cx="5.21" cy="16.49" r=".8" fill="#b4c8d6" stroke="#58788f" stroke-width=".3"/><circle cx="5.08" cy="15.14" r=".8" fill="#b4c8d6" stroke="#58788f" stroke-width=".3"/><circle cx="4.26" cy="13.96" r=".8" fill="#b4c8d6" stroke="#58788f" stroke-width=".3"/><circle cx="2.11" cy="10.01" r=".8" fill="#b4c8d6" stroke="#58788f" stroke-width=".3"/><circle cx="2.02" cy="8.67" r=".8" fill="#b4c8d6" stroke="#58788f" stroke-width=".3"/><circle cx="2.55" cy="7.38" r=".8" fill="#b4c8d6" stroke="#58788f" stroke-width=".3"/><circle cx="3.82" cy="6.93" r=".8" fill="#b4c8d6" stroke="#58788f" stroke-width=".3"/><circle cx="3.56" cy="8.34" r=".8" fill="#b4c8d6" stroke="#58788f" stroke-width=".3"/><circle cx="3.53" cy="9.73" r=".8" fill="#b4c8d6" stroke="#58788f" stroke-width=".3"/><circle cx="3.83" cy="10.83" r=".8" fill="#b4c8d6" stroke="#58788f" stroke-width=".3"/><circle cx="4.69" cy="9.78" r=".8" fill="#b4c8d6" stroke="#58788f" stroke-width=".3"/><circle cx="4.95" cy="8.37" r=".8" fill="#b4c8d6" stroke="#58788f" stroke-width=".3"/><circle cx="6.60" cy="4.06" r=".8" fill="#b4c8d6" stroke="#58788f" stroke-width=".3"/><circle cx="7.48" cy="3.04" r=".8" fill="#b4c8d6" stroke="#58788f" stroke-width=".3"/><circle cx="8.78" cy="2.51" r=".8" fill="#b4c8d6" stroke="#58788f" stroke-width=".3"/><circle cx="9.99" cy="3.09" r=".8" fill="#b4c8d6" stroke="#58788f" stroke-width=".3"/><circle cx="8.81" cy="3.90" r=".8" fill="#b4c8d6" stroke="#58788f" stroke-width=".3"/><circle cx="7.80" cy="4.86" r=".8" fill="#b4c8d6" stroke="#58788f" stroke-width=".3"/><circle cx="7.24" cy="5.85" r=".8" fill="#b4c8d6" stroke="#58788f" stroke-width=".3"/><circle cx="8.59" cy="5.72" r=".8" fill="#b4c8d6" stroke="#58788f" stroke-width=".3"/><circle cx="9.77" cy="4.91" r=".8" fill="#b4c8d6" stroke="#58788f" stroke-width=".3"/><circle cx="14.26" cy="2.76" r=".8" fill="#b4c8d6" stroke="#58788f" stroke-width=".3"/><circle cx="15.59" cy="2.66" r=".8" fill="#b4c8d6" stroke="#58788f" stroke-width=".3"/><circle cx="16.89" cy="3.20" r=".8" fill="#b4c8d6" stroke="#58788f" stroke-width=".3"/><circle cx="17.34" cy="4.47" r=".8" fill="#b4c8d6" stroke="#58788f" stroke-width=".3"/><circle cx="15.93" cy="4.21" r=".8" fill="#b4c8d6" stroke="#58788f" stroke-width=".3"/><circle cx="14.54" cy="4.17" r=".8" fill="#b4c8d6" stroke="#58788f" stroke-width=".3"/><circle cx="13.44" cy="4.47" r=".8" fill="#b4c8d6" stroke="#58788f" stroke-width=".3"/><circle cx="14.48" cy="5.34" r=".8" fill="#b4c8d6" stroke="#58788f" stroke-width=".3"/><circle cx="15.89" cy="5.60" r=".8" fill="#b4c8d6" stroke="#58788f" stroke-width=".3"/><circle cx="20.59" cy="6.87" r=".8" fill="#b4c8d6" stroke="#58788f" stroke-width=".3"/><circle cx="21.60" cy="7.75" r=".8" fill="#b4c8d6" stroke="#58788f" stroke-width=".3"/><circle cx="22.14" cy="9.04" r=".8" fill="#b4c8d6" stroke="#58788f" stroke-width=".3"/><circle cx="21.56" cy="10.26" r=".8" fill="#b4c8d6" stroke="#58788f" stroke-width=".3"/><circle cx="20.75" cy="9.08" r=".8" fill="#b4c8d6" stroke="#58788f" stroke-width=".3"/><circle cx="19.79" cy="8.07" r=".8" fill="#b4c8d6" stroke="#58788f" stroke-width=".3"/><circle cx="18.79" cy="7.51" r=".8" fill="#b4c8d6" stroke="#58788f" stroke-width=".3"/><circle cx="18.92" cy="8.86" r=".8" fill="#b4c8d6" stroke="#58788f" stroke-width=".3"/><circle cx="19.74" cy="10.04" r=".8" fill="#b4c8d6" stroke="#58788f" stroke-width=".3"/><ellipse cx="12" cy="12.2" rx="4.6" ry="4.1" fill="#8ca4b6" stroke="#fff" stroke-width=".6"/><circle cx="10.50" cy="9.20" r=".48" fill="#c8d8e4" stroke="#506c84" stroke-width=".22"/><circle cx="11.50" cy="9.20" r=".48" fill="#c8d8e4" stroke="#506c84" stroke-width=".22"/><circle cx="12.50" cy="9.20" r=".48" fill="#c8d8e4" stroke="#506c84" stroke-width=".22"/><circle cx="13.50" cy="9.20" r=".48" fill="#c8d8e4" stroke="#506c84" stroke-width=".22"/><circle cx="9.00" cy="10.20" r=".48" fill="#c8d8e4" stroke="#506c84" stroke-width=".22"/><circle cx="10.00" cy="10.20" r=".48" fill="#c8d8e4" stroke="#506c84" stroke-width=".22"/><circle cx="11.00" cy="10.20" r=".48" fill="#c8d8e4" stroke="#506c84" stroke-width=".22"/><circle cx="12.00" cy="10.20" r=".48" fill="#c8d8e4" stroke="#506c84" stroke-width=".22"/><circle cx="13.00" cy="10.20" r=".48" fill="#c8d8e4" stroke="#506c84" stroke-width=".22"/><circle cx="14.00" cy="10.20" r=".48" fill="#c8d8e4" stroke="#506c84" stroke-width=".22"/><circle cx="15.00" cy="10.20" r=".48" fill="#c8d8e4" stroke="#506c84" stroke-width=".22"/><circle cx="8.50" cy="11.20" r=".48" fill="#c8d8e4" stroke="#506c84" stroke-width=".22"/><circle cx="9.50" cy="11.20" r=".48" fill="#c8d8e4" stroke="#506c84" stroke-width=".22"/><circle cx="10.50" cy="11.20" r=".48" fill="#c8d8e4" stroke="#506c84" stroke-width=".22"/><circle cx="11.50" cy="11.20" r=".48" fill="#c8d8e4" stroke="#506c84" stroke-width=".22"/><circle cx="12.50" cy="11.20" r=".48" fill="#c8d8e4" stroke="#506c84" stroke-width=".22"/><circle cx="13.50" cy="11.20" r=".48" fill="#c8d8e4" stroke="#506c84" stroke-width=".22"/><circle cx="14.50" cy="11.20" r=".48" fill="#c8d8e4" stroke="#506c84" stroke-width=".22"/><circle cx="15.50" cy="11.20" r=".48" fill="#c8d8e4" stroke="#506c84" stroke-width=".22"/><circle cx="9.00" cy="12.20" r=".48" fill="#c8d8e4" stroke="#506c84" stroke-width=".22"/><circle cx="10.00" cy="12.20" r=".48" fill="#c8d8e4" stroke="#506c84" stroke-width=".22"/><circle cx="11.00" cy="12.20" r=".48" fill="#c8d8e4" stroke="#506c84" stroke-width=".22"/><circle cx="12.00" cy="12.20" r=".48" fill="#c8d8e4" stroke="#506c84" stroke-width=".22"/><circle cx="13.00" cy="12.20" r=".48" fill="#c8d8e4" stroke="#506c84" stroke-width=".22"/><circle cx="14.00" cy="12.20" r=".48" fill="#c8d8e4" stroke="#506c84" stroke-width=".22"/><circle cx="15.00" cy="12.20" r=".48" fill="#c8d8e4" stroke="#506c84" stroke-width=".22"/><circle cx="8.50" cy="13.20" r=".48" fill="#c8d8e4" stroke="#506c84" stroke-width=".22"/><circle cx="9.50" cy="13.20" r=".48" fill="#c8d8e4" stroke="#506c84" stroke-width=".22"/><circle cx="10.50" cy="13.20" r=".48" fill="#c8d8e4" stroke="#506c84" stroke-width=".22"/><circle cx="11.50" cy="13.20" r=".48" fill="#c8d8e4" stroke="#506c84" stroke-width=".22"/><circle cx="12.50" cy="13.20" r=".48" fill="#c8d8e4" stroke="#506c84" stroke-width=".22"/><circle cx="13.50" cy="13.20" r=".48" fill="#c8d8e4" stroke="#506c84" stroke-width=".22"/><circle cx="14.50" cy="13.20" r=".48" fill="#c8d8e4" stroke="#506c84" stroke-width=".22"/><circle cx="15.50" cy="13.20" r=".48" fill="#c8d8e4" stroke="#506c84" stroke-width=".22"/><circle cx="9.00" cy="14.20" r=".48" fill="#c8d8e4" stroke="#506c84" stroke-width=".22"/><circle cx="10.00" cy="14.20" r=".48" fill="#c8d8e4" stroke="#506c84" stroke-width=".22"/><circle cx="11.00" cy="14.20" r=".48" fill="#c8d8e4" stroke="#506c84" stroke-width=".22"/><circle cx="12.00" cy="14.20" r=".48" fill="#c8d8e4" stroke="#506c84" stroke-width=".22"/><circle cx="13.00" cy="14.20" r=".48" fill="#c8d8e4" stroke="#506c84" stroke-width=".22"/><circle cx="14.00" cy="14.20" r=".48" fill="#c8d8e4" stroke="#506c84" stroke-width=".22"/><circle cx="15.00" cy="14.20" r=".48" fill="#c8d8e4" stroke="#506c84" stroke-width=".22"/><circle cx="10.50" cy="15.20" r=".48" fill="#c8d8e4" stroke="#506c84" stroke-width=".22"/><circle cx="11.50" cy="15.20" r=".48" fill="#c8d8e4" stroke="#506c84" stroke-width=".22"/><circle cx="12.50" cy="15.20" r=".48" fill="#c8d8e4" stroke="#506c84" stroke-width=".22"/><circle cx="13.50" cy="15.20" r=".48" fill="#c8d8e4" stroke="#506c84" stroke-width=".22"/></svg>
<div style="left:2337px;top:1967px;width:440px;height:398px;background:#000;"></div>
<div style="left:2531px;top:2166px;width:54px;height:3px;background:#e00000;"></div>
<div style="left:2556.5px;top:2141px;width:3px;height:53px;background:#e00000;"></div>
<div style="left:2947px;top:1989px;width:80px;height:99px;background:#d4d0c8;box-shadow:inset 3px 3px 0 #808080, inset -3px -3px 0 #fff, inset 5.5px 5.5px 0 #404040;"></div>
<div style="left:3038px;top:1989px;width:401px;height:99px;background:#d4d0c8;box-shadow:inset 3px 3px 0 #808080, inset -3px -3px 0 #fff, inset 5.5px 5.5px 0 #404040;"></div>
<div class="t s2" style="left:2947px;width:80px;text-align:center;top:1960.5px;height:160px;line-height:160px;font-size:80px;font-weight:bold;">X</div>
<div class="t s2" style="left:3038px;width:395px;text-align:right;top:1960.5px;height:160px;line-height:160px;font-size:82px;font-weight:bold;color:#0000ff;letter-spacing:-3px;">0.0075</div>
<div style="left:2947px;top:2115px;width:80px;height:100px;background:#d4d0c8;box-shadow:inset 3px 3px 0 #808080, inset -3px -3px 0 #fff, inset 5.5px 5.5px 0 #404040;"></div>
<div style="left:3038px;top:2115px;width:401px;height:100px;background:#d4d0c8;box-shadow:inset 3px 3px 0 #808080, inset -3px -3px 0 #fff, inset 5.5px 5.5px 0 #404040;"></div>
<div class="t s2" style="left:2947px;width:80px;text-align:center;top:2087px;height:160px;line-height:160px;font-size:80px;font-weight:bold;">Y</div>
<div class="t s2" style="left:3038px;width:395px;text-align:right;top:2087px;height:160px;line-height:160px;font-size:82px;font-weight:bold;color:#0000ff;letter-spacing:-3px;">-0.0032</div>
<div style="left:2947px;top:2241px;width:80px;height:100px;background:#d4d0c8;box-shadow:inset 3px 3px 0 #808080, inset -3px -3px 0 #fff, inset 5.5px 5.5px 0 #404040;"></div>
<div style="left:3038px;top:2241px;width:401px;height:100px;background:#d4d0c8;box-shadow:inset 3px 3px 0 #808080, inset -3px -3px 0 #fff, inset 5.5px 5.5px 0 #404040;"></div>
<div class="t s2" style="left:2947px;width:80px;text-align:center;top:2213px;height:160px;line-height:160px;font-size:80px;font-weight:bold;">Z</div>
<div class="t s2" style="left:3038px;width:395px;text-align:right;top:2213px;height:160px;line-height:160px;font-size:82px;font-weight:bold;color:#0000ff;letter-spacing:-3px;">0.0000</div>
<div style="left:2981px;top:2334px;width:473px;height:65px;border-radius:12px;background:linear-gradient(180deg,#fbfdfe 0%,#e4f0f6 45%,#b9dbe8 100%);box-shadow:3px 4px 6px rgba(0,0,0,.35);"></div>
<svg class="i" style="left:2993px;top:2338px;" width="56" height="56" viewBox="0 0 24 24"><circle cx="12" cy="12" r="11" fill="url(#g360)"/><path d="M3 10 A9.3 9.3 0 0 1 21 9 L17.5 10.5 A5.6 5.6 0 0 0 6.8 11 Z" fill="#58b020"/><path d="M21 14 A9.3 9.3 0 0 1 3 15 L6.5 13.5 A5.6 5.6 0 0 0 17.2 13 Z" fill="#58b020"/><path d="M10.3 6.5 H13.7 V10.3 H17.5 V13.7 H13.7 V17.5 H10.3 V13.7 H6.5 V10.3 H10.3 Z" fill="#38a020" stroke="#1c6c10" stroke-width=".9"/></svg>
<svg class="i" style="left:3063px;top:2348px;" width="34" height="34" viewBox="0 0 24 24"><path d="M12 3 V17" stroke="#20b020" stroke-width="3"/><path d="M4 11.5 L12 20.5 L20 11.5" fill="none" stroke="#20b020" stroke-width="3"/></svg>
<svg class="i" style="left:3219px;top:2348px;" width="34" height="34" viewBox="0 0 24 24"><path d="M12 21 V7" stroke="#f0a020" stroke-width="3"/><path d="M4 12.5 L12 3.5 L20 12.5" fill="none" stroke="#f0a020" stroke-width="3"/></svg>
<div class="t c" style="left:3143px;top:2339px;height:54px;line-height:54px;font-size:27px;color:#222;">0K/S</div>
<div class="t c" style="left:3305px;top:2339px;height:54px;line-height:54px;font-size:27px;color:#222;">0K/S</div>
<div style="left:3383px;top:2341px;width:58px;height:49px;border-radius:6px;border:2px solid #a8c8dc;box-sizing:border-box;background:linear-gradient(180deg,#dceaf4,#c4dcea);"></div>
<svg class="i" style="left:3390px;top:2344px;" width="44" height="44" viewBox="0 0 24 24"><path d="M6.2 13 H18.5 C19 7.5 15.5 5 12 5 C7.5 5 5 8.5 5 12.5 C5 17 8.5 19.8 12.3 19.8 C15 19.8 17.3 18.3 18.2 16 H14.8 C14 17 13 17.3 12.2 17.3 C10 17.3 8.6 15.6 8.5 13.8 M8.6 10.8 C9 9 10.3 7.7 12 7.7 C13.8 7.7 15 9 15.2 10.8 Z" fill="#58a0e0" fill-rule="evenodd"/><path d="M3 19.5 C0.5 15.5 7 7 14 4 C18.5 2 22.5 3 21 7.5" fill="none" stroke="#88c0f0" stroke-width="1.4"/></svg>
<div style="left:0px;top:2410px;width:1578px;height:4px;background:#f4f2ee;"></div>
<div style="left:0px;top:2473px;width:3508px;height:3px;background:#ecebe6;"></div>
<div style="left:2534.5px;top:2424px;width:3px;height:40px;background:#8a8880;"></div>
<div style="left:3028.5px;top:2424px;width:3px;height:40px;background:#8a8880;"></div>
<div style="left:3241.5px;top:2424px;width:3px;height:40px;background:#8a8880;"></div>
<div style="left:3356.5px;top:2424px;width:3px;height:40px;background:#8a8880;"></div>
<div style="left:3502.5px;top:2424px;width:3px;height:40px;background:#8a8880;"></div>
<div class="t" style="left:2590px;top:2413px;height:64px;line-height:64px;font-size:32px;color:#000;">[</div>
<div class="t" style="left:2635px;top:2414px;height:64px;line-height:64px;font-size:32px;color:#000;letter-spacing:3px;">0/1</div>
<div class="t" style="left:2723px;top:2413px;height:64px;line-height:64px;font-size:32px;color:#000;">|</div>
<div class="t" style="left:2777px;top:2414px;height:64px;line-height:64px;font-size:32px;color:#000;letter-spacing:2px;">00 : 00 : 00</div>
<div class="t" style="left:2994px;top:2413px;height:64px;line-height:64px;font-size:32px;color:#000;">]</div>
<div class="t c" style="left:3055px;top:2415.5px;height:61px;line-height:61px;font-size:30.5px;color:#000;">直角坐标系</div>
<div class="t c" style="left:3267px;top:2415.5px;height:61px;line-height:61px;font-size:30.5px;color:#000;">毫米</div>
<div class="t c" style="left:3385px;top:2415.5px;height:61px;line-height:61px;font-size:30.5px;color:#000;">十进制</div>
<div class="lab" style="left:1474px;top:5px;width:239px;height:64px;"><span style="position:absolute;left:3px;top:5.5px;line-height:64px;font-size:62px;letter-spacing:14.5px;">标题栏</span></div>
<div class="lab" style="left:1987px;top:55px;width:238px;height:76px;"><span style="position:absolute;left:5px;top:-1px;line-height:76px;font-size:62px;letter-spacing:14.5px;">菜单栏</span></div>
<div class="lab" style="left:1047px;top:226px;width:244px;height:72px;"><span style="position:absolute;left:6px;top:3px;line-height:72px;font-size:62px;letter-spacing:14.5px;">工具栏</span></div>
<div class="lab" style="left:224px;top:870px;width:239px;height:68px;"><span style="position:absolute;left:-2px;top:4px;line-height:68px;font-size:62px;letter-spacing:14.5px;">程序窗</span></div>
<div class="lab" style="left:1603px;top:1214px;width:310px;height:77px;"><span style="position:absolute;left:2px;top:2px;line-height:77px;font-size:62px;letter-spacing:14.5px;">影像窗口</span></div>
<div class="wm" style="left:1735px;top:1212px;font-size:46px;line-height:54px;">科仪器</div>
<div class="lab" style="left:1678px;top:1833px;width:490px;height:71px;"><span style="position:absolute;left:0.5px;top:2px;line-height:71px;font-size:62px;letter-spacing:14.5px;">光源控制窗口</span></div>
<div class="lab" style="left:3096px;top:1864px;width:322px;height:66px;"><span style="position:absolute;left:7px;top:3.6px;line-height:66px;font-size:62px;letter-spacing:14.5px;">坐标窗口</span></div>
<div class="lab" style="left:483px;top:2219px;width:487px;height:83px;"><span style="position:absolute;left:5px;top:-2.5px;line-height:83px;font-size:62px;letter-spacing:14.5px;">测量结果窗口</span></div>
<div class="lab" style="left:1175px;top:2407px;width:253px;height:62px;"><span style="position:absolute;left:2px;top:3px;line-height:62px;font-size:62px;letter-spacing:14.5px;">状态栏</span></div>
</div></body></html>
